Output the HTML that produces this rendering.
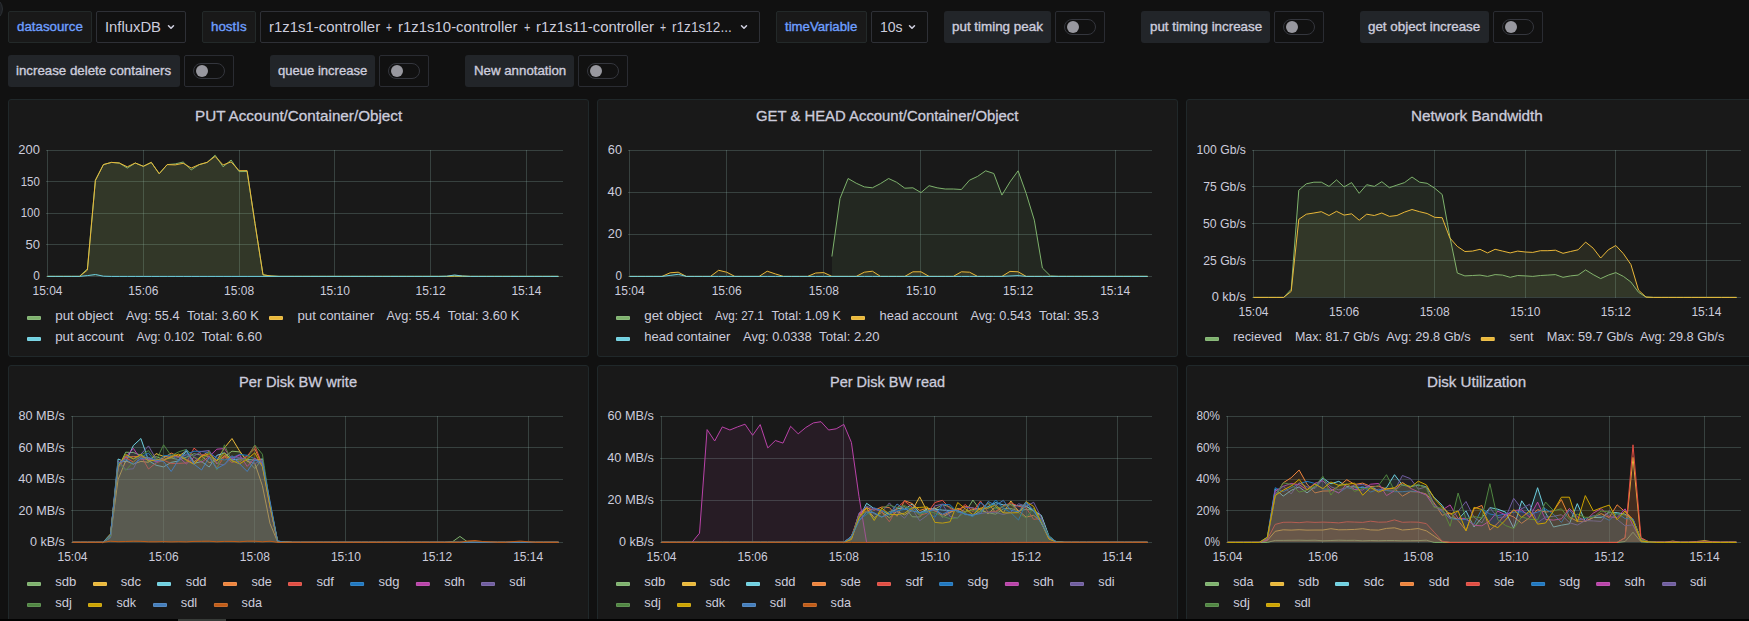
<!DOCTYPE html>
<html lang="en"><head><meta charset="utf-8"><title>Swift benchmark dashboard</title>
<style>
html,body{margin:0;padding:0;background:#111111;}
body{width:1749px;height:621px;overflow:hidden;position:relative;
 font-family:"Liberation Sans",sans-serif;color:#ccccdc;}
.abs{position:absolute;box-sizing:border-box;}
.lbl{position:absolute;box-sizing:border-box;height:32px;top:11px;border-radius:2px;}
.lbl.var{background:#191919;border:1px solid #232929;color:#6e9fff;}
.lbl.ann{background:#222529;border-radius:3px;}
.val{position:absolute;box-sizing:border-box;height:32px;top:11px;border:1px solid #2e3036;
 border-radius:2px;background:#111111;}
.t{position:absolute;white-space:nowrap;transform-origin:0 0;line-height:1;display:block;}
.tg{position:absolute;box-sizing:border-box;height:32px;width:50px;border:1px solid #2a2c32;
 border-radius:2px;background:#111111;}
.tg i{position:absolute;left:8px;top:7px;width:32px;height:16px;box-sizing:border-box;
 border:1px solid #34363d;border-radius:8px;background:#111111;}
.tg b{position:absolute;left:11px;top:9px;width:12px;height:12px;border-radius:50%;background:#98989f;}
.panel{position:absolute;box-sizing:border-box;width:581px;height:258px;background:#191919;
 border:1px solid #20282a;border-radius:3px;overflow:hidden;}
.panel svg{position:absolute;left:-1px;top:-1px;}
.title{position:absolute;white-space:nowrap;transform-origin:0 0;line-height:1;}
svg text{font-family:"Liberation Sans",sans-serif;fill:#ccccdc;}
</style></head><body>

<div class="abs" style="left:-21px;top:-2.6px;width:24px;height:24px;border-radius:50%;background:#1e2024;border:1px solid #2c3034"></div>
<div id="submenu">
<div class="lbl var" style="left:8px;width:84px;top:11px"></div>
<span class="t" style="left:17.10px;top:20.70px;font-size:12.40px;transform:scaleX(1.0741);color:#6e9fff;-webkit-text-stroke:0.35px #6e9fff;">datasource</span>
<div class="val" style="left:96px;width:90px;top:11px"></div>
<span class="t" style="left:105.20px;top:19.81px;font-size:14.40px;transform:scaleX(1.0290);">InfluxDB</span>
<svg class="abs" style="left:164.5px;top:20.8px" width="12" height="12" viewBox="0 0 12 12"><path d="M3.5 4.7 L6 7.3 L8.5 4.7" fill="none" stroke="#d0d0e0" stroke-width="1.5" stroke-linecap="round" stroke-linejoin="round"/></svg>
<div class="lbl var" style="left:202px;width:54px;top:11px"></div>
<span class="t" style="left:211.30px;top:20.70px;font-size:12.40px;transform:scaleX(1.0791);color:#6e9fff;-webkit-text-stroke:0.35px #6e9fff;">hostIs</span>
<div class="val" style="left:260px;width:500px;top:11px"></div>
<span class="t" style="left:269.20px;top:19.81px;font-size:14.40px;transform:scaleX(1.0369);">r1z1s1-controller</span>
<span class="t" style="left:386.40px;top:19.81px;font-size:14.40px;transform:scaleX(0.7135);">+</span>
<span class="t" style="left:398.40px;top:19.81px;font-size:14.40px;transform:scaleX(1.0377);">r1z1s10-controller</span>
<span class="t" style="left:523.70px;top:19.81px;font-size:14.40px;transform:scaleX(0.7611);">+</span>
<span class="t" style="left:536.10px;top:19.81px;font-size:14.40px;transform:scaleX(1.0334);">r1z1s11-controller</span>
<span class="t" style="left:659.60px;top:19.81px;font-size:14.40px;transform:scaleX(0.7373);">+</span>
<span class="t" style="left:671.70px;top:19.81px;font-size:14.40px;transform:scaleX(0.9457);">r1z1s12...</span>
<svg class="abs" style="left:737.9px;top:20.8px" width="12" height="12" viewBox="0 0 12 12"><path d="M3.5 4.7 L6 7.3 L8.5 4.7" fill="none" stroke="#d0d0e0" stroke-width="1.5" stroke-linecap="round" stroke-linejoin="round"/></svg>
<div class="lbl var" style="left:776px;width:91px;top:11px"></div>
<span class="t" style="left:785.20px;top:20.70px;font-size:12.40px;transform:scaleX(1.0632);color:#6e9fff;-webkit-text-stroke:0.35px #6e9fff;">timeVariable</span>
<div class="val" style="left:871px;width:57px;top:11px"></div>
<span class="t" style="left:880.40px;top:19.81px;font-size:14.40px;transform:scaleX(0.9734);">10s</span>
<svg class="abs" style="left:906.1px;top:20.8px" width="12" height="12" viewBox="0 0 12 12"><path d="M3.5 4.7 L6 7.3 L8.5 4.7" fill="none" stroke="#d0d0e0" stroke-width="1.5" stroke-linecap="round" stroke-linejoin="round"/></svg>
<div class="lbl ann" style="left:944px;width:107px;top:11px"></div>
<span class="t" style="left:952.30px;top:20.70px;font-size:12.40px;transform:scaleX(1.0809);color:#ccccdc;-webkit-text-stroke:0.35px #ccccdc;">put timing peak</span>
<div class="tg" style="left:1055px;top:11px"><i></i><b></b></div>
<div class="lbl ann" style="left:1141px;width:129px;top:11px"></div>
<span class="t" style="left:1149.60px;top:20.70px;font-size:12.40px;transform:scaleX(1.0781);color:#ccccdc;-webkit-text-stroke:0.35px #ccccdc;">put timing increase</span>
<div class="tg" style="left:1274px;top:11px"><i></i><b></b></div>
<div class="lbl ann" style="left:1360px;width:129px;top:11px"></div>
<span class="t" style="left:1368.20px;top:20.70px;font-size:12.40px;transform:scaleX(1.0789);color:#ccccdc;-webkit-text-stroke:0.35px #ccccdc;">get object increase</span>
<div class="tg" style="left:1493px;top:11px"><i></i><b></b></div>
<div class="lbl ann" style="left:8px;width:172px;top:55px"></div>
<span class="t" style="left:16.30px;top:64.70px;font-size:12.40px;transform:scaleX(1.0721);color:#ccccdc;-webkit-text-stroke:0.35px #ccccdc;">increase delete containers</span>
<div class="tg" style="left:184px;top:55px"><i></i><b></b></div>
<div class="lbl ann" style="left:270px;width:105px;top:55px"></div>
<span class="t" style="left:278.00px;top:64.70px;font-size:12.40px;transform:scaleX(1.0531);color:#ccccdc;-webkit-text-stroke:0.35px #ccccdc;">queue increase</span>
<div class="tg" style="left:379px;top:55px"><i></i><b></b></div>
<div class="lbl ann" style="left:465px;width:109px;top:55px"></div>
<span class="t" style="left:473.50px;top:64.70px;font-size:12.40px;transform:scaleX(1.0711);color:#ccccdc;-webkit-text-stroke:0.35px #ccccdc;">New annotation</span>
<div class="tg" style="left:578px;top:55px"><i></i><b></b></div>
</div>
<main id="grid">
<section class="panel" style="left:8px;top:99px">
<h2 class="title" style="margin:0;font-weight:normal;left:185.90px;top:8.97px;font-size:14.80px;transform:scaleX(1.0294);-webkit-text-stroke:0.3px #ccccdc">PUT Account/Container/Object</h2>
<svg width="581" height="258" viewBox="0 0 581 258">
<path d="M38.0 177.5 H555.3 M38.0 145.5 H555.3 M38.0 114.5 H555.3 M38.0 82.5 H555.3 M38.0 51.5 H555.3" stroke="rgba(149,189,181,0.25)" stroke-width="1" fill="none" shape-rendering="crispEdges"/>
<path d="M39.5 51.0 V178.0 M135.5 51.0 V178.0 M231.5 51.0 V178.0 M326.5 51.0 V178.0 M422.5 51.0 V178.0 M518.5 51.0 V178.0" stroke="rgba(149,189,181,0.25)" stroke-width="1" fill="none" shape-rendering="crispEdges"/>
<path d="M39.5 177.4 L47.5 177.4 L55.5 177.4 L63.4 177.4 L71.4 177.4 L79.4 169.8 L87.4 81.3 L95.4 65.6 L103.4 63.4 L111.3 64.0 L119.3 69.1 L127.3 64.0 L135.3 67.3 L143.3 63.4 L151.2 74.7 L159.2 65.6 L167.2 64.9 L175.2 63.0 L183.2 70.9 L191.2 65.6 L199.1 63.4 L207.1 56.2 L215.1 67.8 L223.1 61.0 L231.1 72.6 L239.1 72.5 L247.0 124.5 L255.0 175.8 L263.0 177.0 L271.0 177.4 L279.0 177.4 L286.9 177.4 L294.9 177.4 L302.9 177.4 L310.9 177.4 L318.9 177.4 L326.9 177.4 L334.8 177.4 L342.8 177.4 L350.8 177.4 L358.8 177.4 L366.8 177.4 L374.7 177.4 L382.7 177.4 L390.7 177.4 L398.7 177.4 L406.7 177.4 L414.7 177.4 L422.6 177.4 L430.6 177.4 L438.6 177.4 L446.6 177.4 L454.6 177.4 L462.5 177.4 L470.5 177.4 L478.5 177.4 L486.5 177.4 L494.5 177.4 L502.5 177.4 L510.4 177.4 L518.4 177.4 L526.4 177.4 L534.4 177.4 L542.4 177.4 L550.4 177.4 L550.4 177.1 L39.5 177.1 Z" fill="#7EB26D" fill-opacity="0.1" stroke="none"/>
<path d="M39.5 177.4 L47.5 177.4 L55.5 177.4 L63.4 177.4 L71.4 177.4 L79.4 169.8 L87.4 81.3 L95.4 65.6 L103.4 63.4 L111.3 64.0 L119.3 69.1 L127.3 64.0 L135.3 67.3 L143.3 63.4 L151.2 74.7 L159.2 65.6 L167.2 64.9 L175.2 63.0 L183.2 70.9 L191.2 65.6 L199.1 63.4 L207.1 56.2 L215.1 67.8 L223.1 61.0 L231.1 72.6 L239.1 72.5 L247.0 124.5 L255.0 175.8 L263.0 177.0 L271.0 177.4 L279.0 177.4 L286.9 177.4 L294.9 177.4 L302.9 177.4 L310.9 177.4 L318.9 177.4 L326.9 177.4 L334.8 177.4 L342.8 177.4 L350.8 177.4 L358.8 177.4 L366.8 177.4 L374.7 177.4 L382.7 177.4 L390.7 177.4 L398.7 177.4 L406.7 177.4 L414.7 177.4 L422.6 177.4 L430.6 177.4 L438.6 177.4 L446.6 177.4 L454.6 177.4 L462.5 177.4 L470.5 177.4 L478.5 177.4 L486.5 177.4 L494.5 177.4 L502.5 177.4 L510.4 177.4 L518.4 177.4 L526.4 177.4 L534.4 177.4 L542.4 177.4 L550.4 177.4" fill="none" stroke="#7EB26D" stroke-width="1" stroke-linejoin="round"/>
<path d="M39.5 177.4 L47.5 177.4 L55.5 177.4 L63.4 177.4 L71.4 177.4 L79.4 171.1 L87.4 81.3 L95.4 65.6 L103.4 63.4 L111.3 64.0 L119.3 67.8 L127.3 64.0 L135.3 67.3 L143.3 63.4 L151.2 74.7 L159.2 65.6 L167.2 65.9 L175.2 64.3 L183.2 69.0 L191.2 65.6 L199.1 63.4 L207.1 57.4 L215.1 65.9 L223.1 62.9 L231.1 71.7 L239.1 71.6 L247.0 124.5 L255.0 175.8 L263.0 177.0 L271.0 177.4 L279.0 177.4 L286.9 177.4 L294.9 177.4 L302.9 177.4 L310.9 177.4 L318.9 177.4 L326.9 177.4 L334.8 177.4 L342.8 177.4 L350.8 177.4 L358.8 177.4 L366.8 177.4 L374.7 177.4 L382.7 177.4 L390.7 177.4 L398.7 177.4 L406.7 177.4 L414.7 177.4 L422.6 177.4 L430.6 177.4 L438.6 177.4 L446.6 176.9 L454.6 177.1 L462.5 177.4 L470.5 177.4 L478.5 177.4 L486.5 177.4 L494.5 177.4 L502.5 177.4 L510.4 177.4 L518.4 177.4 L526.4 177.4 L534.4 177.4 L542.4 177.4 L550.4 177.4 L550.4 177.1 L39.5 177.1 Z" fill="#b7c06e" fill-opacity="0.1" stroke="none"/>
<path d="M39.5 177.4 L47.5 177.4 L55.5 177.4 L63.4 177.4 L71.4 177.4 L79.4 171.1 L87.4 81.3 L95.4 65.6 L103.4 63.4 L111.3 64.0 L119.3 67.8 L127.3 64.0 L135.3 67.3 L143.3 63.4 L151.2 74.7 L159.2 65.6 L167.2 65.9 L175.2 64.3 L183.2 69.0 L191.2 65.6 L199.1 63.4 L207.1 57.4 L215.1 65.9 L223.1 62.9 L231.1 71.7 L239.1 71.6 L247.0 124.5 L255.0 175.8 L263.0 177.0 L271.0 177.4 L279.0 177.4 L286.9 177.4 L294.9 177.4 L302.9 177.4 L310.9 177.4 L318.9 177.4 L326.9 177.4 L334.8 177.4 L342.8 177.4 L350.8 177.4 L358.8 177.4 L366.8 177.4 L374.7 177.4 L382.7 177.4 L390.7 177.4 L398.7 177.4 L406.7 177.4 L414.7 177.4 L422.6 177.4 L430.6 177.4 L438.6 177.4 L446.6 176.9 L454.6 177.1 L462.5 177.4 L470.5 177.4 L478.5 177.4 L486.5 177.4 L494.5 177.4 L502.5 177.4 L510.4 177.4 L518.4 177.4 L526.4 177.4 L534.4 177.4 L542.4 177.4 L550.4 177.4" fill="none" stroke="#EAB839" stroke-width="1" stroke-linejoin="round"/>
<path d="M39.5 177.4 L47.5 177.4 L55.5 177.4 L63.4 177.4 L71.4 177.4 L79.4 176.6 L87.4 175.5 L95.4 177.2 L103.4 177.4 L111.3 177.4 L119.3 177.4 L127.3 177.4 L135.3 177.4 L143.3 177.4 L151.2 177.4 L159.2 177.4 L167.2 177.4 L175.2 177.4 L183.2 177.4 L191.2 177.4 L199.1 177.4 L207.1 177.4 L215.1 177.4 L223.1 177.4 L231.1 177.4 L239.1 177.4 L247.0 177.4 L255.0 177.4 L263.0 177.4 L271.0 177.4 L279.0 177.4 L286.9 177.4 L294.9 177.4 L302.9 177.4 L310.9 177.4 L318.9 177.4 L326.9 177.4 L334.8 177.4 L342.8 177.4 L350.8 177.4 L358.8 177.4 L366.8 177.4 L374.7 177.4 L382.7 177.4 L390.7 177.4 L398.7 177.4 L406.7 177.4 L414.7 177.4 L422.6 177.4 L430.6 177.4 L438.6 177.2 L446.6 176.0 L454.6 177.1 L462.5 177.4 L470.5 177.4 L478.5 177.4 L486.5 177.4 L494.5 177.4 L502.5 177.4 L510.4 177.4 L518.4 177.4 L526.4 177.4 L534.4 177.4 L542.4 177.4 L550.4 177.4 L550.4 177.1 L39.5 177.1 Z" fill="#6ED0E0" fill-opacity="0.1" stroke="none"/>
<path d="M39.5 177.4 L47.5 177.4 L55.5 177.4 L63.4 177.4 L71.4 177.4 L79.4 176.6 L87.4 175.5 L95.4 177.2 L103.4 177.4 L111.3 177.4 L119.3 177.4 L127.3 177.4 L135.3 177.4 L143.3 177.4 L151.2 177.4 L159.2 177.4 L167.2 177.4 L175.2 177.4 L183.2 177.4 L191.2 177.4 L199.1 177.4 L207.1 177.4 L215.1 177.4 L223.1 177.4 L231.1 177.4 L239.1 177.4 L247.0 177.4 L255.0 177.4 L263.0 177.4 L271.0 177.4 L279.0 177.4 L286.9 177.4 L294.9 177.4 L302.9 177.4 L310.9 177.4 L318.9 177.4 L326.9 177.4 L334.8 177.4 L342.8 177.4 L350.8 177.4 L358.8 177.4 L366.8 177.4 L374.7 177.4 L382.7 177.4 L390.7 177.4 L398.7 177.4 L406.7 177.4 L414.7 177.4 L422.6 177.4 L430.6 177.4 L438.6 177.2 L446.6 176.0 L454.6 177.1 L462.5 177.4 L470.5 177.4 L478.5 177.4 L486.5 177.4 L494.5 177.4 L502.5 177.4 L510.4 177.4 L518.4 177.4 L526.4 177.4 L534.4 177.4 L542.4 177.4 L550.4 177.4" fill="none" stroke="#6ED0E0" stroke-width="1" stroke-linejoin="round"/>
<text x="25.30" y="181.3" font-size="12.2" textLength="6.60" lengthAdjust="spacingAndGlyphs">0</text>
<text x="17.40" y="149.8" font-size="12.2" textLength="14.50" lengthAdjust="spacingAndGlyphs">50</text>
<text x="12.70" y="118.3" font-size="12.2" textLength="19.20" lengthAdjust="spacingAndGlyphs">100</text>
<text x="12.70" y="86.8" font-size="12.2" textLength="19.20" lengthAdjust="spacingAndGlyphs">150</text>
<text x="10.30" y="55.3" font-size="12.2" textLength="21.60" lengthAdjust="spacingAndGlyphs">200</text>
<text x="39.5" y="196.0" font-size="12.0" text-anchor="middle">15:04</text>
<text x="135.3" y="196.0" font-size="12.0" text-anchor="middle">15:06</text>
<text x="231.1" y="196.0" font-size="12.0" text-anchor="middle">15:08</text>
<text x="326.9" y="196.0" font-size="12.0" text-anchor="middle">15:10</text>
<text x="422.6" y="196.0" font-size="12.0" text-anchor="middle">15:12</text>
<text x="518.4" y="196.0" font-size="12.0" text-anchor="middle">15:14</text>
<rect x="19.0" y="217.0" width="14" height="4" rx="1" fill="#8ab97b"/><rect x="20.0" y="218.0" width="12" height="2" fill="#7EB26D"/>
<text x="47.20" y="221.20" font-size="12.4" textLength="58.10" lengthAdjust="spacingAndGlyphs">put object</text>
<text x="118.00" y="221.20" font-size="12.4" textLength="53.50" lengthAdjust="spacingAndGlyphs">Avg: 55.4</text>
<text x="178.90" y="221.20" font-size="12.4" textLength="72.10" lengthAdjust="spacingAndGlyphs">Total: 3.60 K</text>
<rect x="261.0" y="217.0" width="14" height="4" rx="1" fill="#ecbf4c"/><rect x="262.0" y="218.0" width="12" height="2" fill="#EAB839"/>
<text x="289.40" y="221.20" font-size="12.4" textLength="76.70" lengthAdjust="spacingAndGlyphs">put container</text>
<text x="378.60" y="221.20" font-size="12.4" textLength="53.50" lengthAdjust="spacingAndGlyphs">Avg: 55.4</text>
<text x="439.80" y="221.20" font-size="12.4" textLength="71.50" lengthAdjust="spacingAndGlyphs">Total: 3.60 K</text>
<rect x="19.0" y="238.0" width="14" height="4" rx="1" fill="#7cd4e3"/><rect x="20.0" y="239.0" width="12" height="2" fill="#6ED0E0"/>
<text x="47.20" y="242.20" font-size="12.4" textLength="68.60" lengthAdjust="spacingAndGlyphs">put account</text>
<text x="128.60" y="242.20" font-size="12.4" textLength="57.80" lengthAdjust="spacingAndGlyphs">Avg: 0.102</text>
<text x="193.80" y="242.20" font-size="12.4" textLength="60.10" lengthAdjust="spacingAndGlyphs">Total: 6.60</text>
</svg></section>
<section class="panel" style="left:597px;top:99px">
<h2 class="title" style="margin:0;font-weight:normal;left:158.25px;top:8.97px;font-size:14.80px;transform:scaleX(1.0045);-webkit-text-stroke:0.3px #ccccdc">GET &amp; HEAD Account/Container/Object</h2>
<svg width="581" height="258" viewBox="0 0 581 258">
<path d="M31.1 177.5 H555.3 M31.1 135.5 H555.3 M31.1 93.5 H555.3 M31.1 51.5 H555.3" stroke="rgba(149,189,181,0.25)" stroke-width="1" fill="none" shape-rendering="crispEdges"/>
<path d="M32.5 51.0 V178.0 M129.5 51.0 V178.0 M226.5 51.0 V178.0 M323.5 51.0 V178.0 M421.5 51.0 V178.0 M518.5 51.0 V178.0" stroke="rgba(149,189,181,0.25)" stroke-width="1" fill="none" shape-rendering="crispEdges"/>
<path d="M234.9 157.5 L243.0 99.5 L251.1 79.5 L259.2 84.2 L267.3 87.9 L275.4 88.8 L283.5 84.6 L291.6 79.5 L299.7 83.3 L307.8 89.2 L315.9 88.8 L324.0 93.6 L332.1 86.7 L340.1 88.8 L348.2 90.0 L356.3 90.0 L364.4 90.5 L372.5 81.2 L380.6 77.4 L388.7 71.8 L396.8 74.5 L404.9 96.1 L413.0 82.9 L421.1 71.8 L429.2 94.5 L437.3 121.1 L445.4 169.0 L453.5 177.0 L461.5 177.4 L469.6 177.4 L477.7 177.4 L485.8 177.4 L493.9 177.4 L502.0 177.4 L510.1 177.4 L518.2 177.4 L526.3 177.4 L534.4 177.4 L542.5 177.4 L550.6 177.4 L550.6 177.1 L234.9 177.1 Z" fill="#7EB26D" fill-opacity="0.1" stroke="none"/>
<path d="M234.9 157.5 L243.0 99.5 L251.1 79.5 L259.2 84.2 L267.3 87.9 L275.4 88.8 L283.5 84.6 L291.6 79.5 L299.7 83.3 L307.8 89.2 L315.9 88.8 L324.0 93.6 L332.1 86.7 L340.1 88.8 L348.2 90.0 L356.3 90.0 L364.4 90.5 L372.5 81.2 L380.6 77.4 L388.7 71.8 L396.8 74.5 L404.9 96.1 L413.0 82.9 L421.1 71.8 L429.2 94.5 L437.3 121.1 L445.4 169.0 L453.5 177.0 L461.5 177.4 L469.6 177.4 L477.7 177.4 L485.8 177.4 L493.9 177.4 L502.0 177.4 L510.1 177.4 L518.2 177.4 L526.3 177.4 L534.4 177.4 L542.5 177.4 L550.6 177.4" fill="none" stroke="#7EB26D" stroke-width="1" stroke-linejoin="round"/>
<path d="M32.6 177.4 L40.7 177.4 L48.8 177.4 L56.9 177.4 L65.0 177.4 L73.1 173.8 L81.2 173.2 L89.3 177.4 L97.3 177.4 L105.4 177.4 L113.5 177.4 L121.6 171.3 L129.7 173.2 L137.8 177.4 L145.9 177.4 L154.0 177.4 L162.1 177.4 L170.2 172.2 L178.3 174.9 L186.4 177.4 L194.5 177.4 L202.6 177.4 L210.7 177.4 L218.7 174.0 L226.8 173.6 L234.9 177.4 L243.0 177.4 L251.1 177.4 L259.2 177.4 L267.3 173.2 L275.4 172.2 L283.5 177.4 L291.6 177.4 L299.7 177.4 L307.8 177.4 L315.9 172.8 L324.0 172.8 L332.1 177.4 L340.1 177.4 L348.2 177.4 L356.3 177.4 L364.4 172.8 L372.5 173.2 L380.6 177.4 L388.7 177.4 L396.8 177.4 L404.9 177.4 L413.0 172.4 L421.1 172.8 L429.2 177.4 L437.3 177.4 L445.4 177.4 L453.5 177.4 L461.5 177.4 L469.6 177.4 L477.7 177.4 L485.8 177.4 L493.9 177.4 L502.0 177.4 L510.1 177.4 L518.2 177.4 L526.3 177.4 L534.4 177.4 L542.5 177.4 L550.6 177.4 L550.6 177.1 L32.6 177.1 Z" fill="#b7c06e" fill-opacity="0.1" stroke="none"/>
<path d="M32.6 177.4 L40.7 177.4 L48.8 177.4 L56.9 177.4 L65.0 177.4 L73.1 173.8 L81.2 173.2 L89.3 177.4 L97.3 177.4 L105.4 177.4 L113.5 177.4 L121.6 171.3 L129.7 173.2 L137.8 177.4 L145.9 177.4 L154.0 177.4 L162.1 177.4 L170.2 172.2 L178.3 174.9 L186.4 177.4 L194.5 177.4 L202.6 177.4 L210.7 177.4 L218.7 174.0 L226.8 173.6 L234.9 177.4 L243.0 177.4 L251.1 177.4 L259.2 177.4 L267.3 173.2 L275.4 172.2 L283.5 177.4 L291.6 177.4 L299.7 177.4 L307.8 177.4 L315.9 172.8 L324.0 172.8 L332.1 177.4 L340.1 177.4 L348.2 177.4 L356.3 177.4 L364.4 172.8 L372.5 173.2 L380.6 177.4 L388.7 177.4 L396.8 177.4 L404.9 177.4 L413.0 172.4 L421.1 172.8 L429.2 177.4 L437.3 177.4 L445.4 177.4 L453.5 177.4 L461.5 177.4 L469.6 177.4 L477.7 177.4 L485.8 177.4 L493.9 177.4 L502.0 177.4 L510.1 177.4 L518.2 177.4 L526.3 177.4 L534.4 177.4 L542.5 177.4 L550.6 177.4" fill="none" stroke="#EAB839" stroke-width="1" stroke-linejoin="round"/>
<path d="M32.6 177.4 L40.7 177.4 L48.8 177.4 L56.9 177.4 L65.0 177.4 L73.1 176.4 L81.2 175.3 L89.3 177.4 L97.3 177.4 L105.4 177.4 L113.5 177.4 L121.6 177.4 L129.7 177.4 L137.8 177.4 L145.9 177.4 L154.0 177.4 L162.1 177.4 L170.2 177.4 L178.3 177.4 L186.4 177.4 L194.5 177.4 L202.6 177.4 L210.7 177.4 L218.7 177.4 L226.8 177.4 L234.9 177.4 L243.0 177.4 L251.1 177.4 L259.2 177.4 L267.3 177.4 L275.4 177.4 L283.5 177.4 L291.6 177.4 L299.7 177.4 L307.8 177.4 L315.9 177.4 L324.0 177.4 L332.1 177.4 L340.1 177.4 L348.2 177.4 L356.3 177.4 L364.4 177.4 L372.5 177.4 L380.6 177.4 L388.7 177.4 L396.8 177.4 L404.9 177.4 L413.0 177.0 L421.1 176.6 L429.2 177.4 L437.3 177.4 L445.4 177.4 L453.5 177.4 L461.5 177.4 L469.6 177.4 L477.7 177.4 L485.8 177.4 L493.9 177.4 L502.0 177.4 L510.1 177.4 L518.2 177.4 L526.3 177.4 L534.4 177.4 L542.5 177.4 L550.6 177.4 L550.6 177.1 L32.6 177.1 Z" fill="#6ED0E0" fill-opacity="0.1" stroke="none"/>
<path d="M32.6 177.4 L40.7 177.4 L48.8 177.4 L56.9 177.4 L65.0 177.4 L73.1 176.4 L81.2 175.3 L89.3 177.4 L97.3 177.4 L105.4 177.4 L113.5 177.4 L121.6 177.4 L129.7 177.4 L137.8 177.4 L145.9 177.4 L154.0 177.4 L162.1 177.4 L170.2 177.4 L178.3 177.4 L186.4 177.4 L194.5 177.4 L202.6 177.4 L210.7 177.4 L218.7 177.4 L226.8 177.4 L234.9 177.4 L243.0 177.4 L251.1 177.4 L259.2 177.4 L267.3 177.4 L275.4 177.4 L283.5 177.4 L291.6 177.4 L299.7 177.4 L307.8 177.4 L315.9 177.4 L324.0 177.4 L332.1 177.4 L340.1 177.4 L348.2 177.4 L356.3 177.4 L364.4 177.4 L372.5 177.4 L380.6 177.4 L388.7 177.4 L396.8 177.4 L404.9 177.4 L413.0 177.0 L421.1 176.6 L429.2 177.4 L437.3 177.4 L445.4 177.4 L453.5 177.4 L461.5 177.4 L469.6 177.4 L477.7 177.4 L485.8 177.4 L493.9 177.4 L502.0 177.4 L510.1 177.4 L518.2 177.4 L526.3 177.4 L534.4 177.4 L542.5 177.4 L550.6 177.4" fill="none" stroke="#6ED0E0" stroke-width="1" stroke-linejoin="round"/>
<text x="18.50" y="181.3" font-size="12.2" textLength="6.50" lengthAdjust="spacingAndGlyphs">0</text>
<text x="10.80" y="139.3" font-size="12.2" textLength="14.20" lengthAdjust="spacingAndGlyphs">20</text>
<text x="10.60" y="97.3" font-size="12.2" textLength="14.40" lengthAdjust="spacingAndGlyphs">40</text>
<text x="10.80" y="55.3" font-size="12.2" textLength="14.20" lengthAdjust="spacingAndGlyphs">60</text>
<text x="32.6" y="196.0" font-size="12.0" text-anchor="middle">15:04</text>
<text x="129.7" y="196.0" font-size="12.0" text-anchor="middle">15:06</text>
<text x="226.8" y="196.0" font-size="12.0" text-anchor="middle">15:08</text>
<text x="324.0" y="196.0" font-size="12.0" text-anchor="middle">15:10</text>
<text x="421.1" y="196.0" font-size="12.0" text-anchor="middle">15:12</text>
<text x="518.2" y="196.0" font-size="12.0" text-anchor="middle">15:14</text>
<rect x="19.0" y="217.0" width="14" height="4" rx="1" fill="#8ab97b"/><rect x="20.0" y="218.0" width="12" height="2" fill="#7EB26D"/>
<text x="47.20" y="221.20" font-size="12.4" textLength="58.10" lengthAdjust="spacingAndGlyphs">get object</text>
<text x="118.00" y="221.20" font-size="12.4" textLength="48.70" lengthAdjust="spacingAndGlyphs">Avg: 27.1</text>
<text x="174.60" y="221.20" font-size="12.4" textLength="69.30" lengthAdjust="spacingAndGlyphs">Total: 1.09 K</text>
<rect x="254.0" y="217.0" width="14" height="4" rx="1" fill="#ecbf4c"/><rect x="255.0" y="218.0" width="12" height="2" fill="#EAB839"/>
<text x="282.50" y="221.20" font-size="12.4" textLength="78.00" lengthAdjust="spacingAndGlyphs">head account</text>
<text x="373.40" y="221.20" font-size="12.4" textLength="60.90" lengthAdjust="spacingAndGlyphs">Avg: 0.543</text>
<text x="442.00" y="221.20" font-size="12.4" textLength="60.00" lengthAdjust="spacingAndGlyphs">Total: 35.3</text>
<rect x="19.0" y="238.0" width="14" height="4" rx="1" fill="#7cd4e3"/><rect x="20.0" y="239.0" width="12" height="2" fill="#6ED0E0"/>
<text x="47.20" y="242.20" font-size="12.4" textLength="86.20" lengthAdjust="spacingAndGlyphs">head container</text>
<text x="146.10" y="242.20" font-size="12.4" textLength="68.60" lengthAdjust="spacingAndGlyphs">Avg: 0.0338</text>
<text x="222.10" y="242.20" font-size="12.4" textLength="60.40" lengthAdjust="spacingAndGlyphs">Total: 2.20</text>
</svg></section>
<section class="panel" style="left:1186px;top:99px">
<h2 class="title" style="margin:0;font-weight:normal;left:223.55px;top:8.97px;font-size:14.80px;transform:scaleX(1.0345);-webkit-text-stroke:0.3px #ccccdc">Network Bandwidth</h2>
<svg width="581" height="258" viewBox="0 0 581 258">
<path d="M66.0 198.5 H555.3 M66.0 161.5 H555.3 M66.0 124.5 H555.3 M66.0 87.5 H555.3 M66.0 51.5 H555.3" stroke="rgba(149,189,181,0.25)" stroke-width="1" fill="none" shape-rendering="crispEdges"/>
<path d="M67.5 51.0 V199.0 M158.5 51.0 V199.0 M248.5 51.0 V199.0 M339.5 51.0 V199.0 M429.5 51.0 V199.0 M520.5 51.0 V199.0" stroke="rgba(149,189,181,0.25)" stroke-width="1" fill="none" shape-rendering="crispEdges"/>
<path d="M67.5 198.4 L75.0 198.4 L82.6 198.4 L90.1 198.4 L97.7 198.4 L105.2 190.3 L112.8 91.2 L120.3 84.8 L127.9 83.2 L135.4 83.2 L143.0 87.4 L150.5 80.9 L158.1 87.9 L165.6 83.6 L173.2 94.3 L180.7 85.7 L188.3 87.4 L195.8 82.7 L203.4 88.7 L210.9 86.1 L218.5 83.6 L226.0 78.0 L233.6 83.2 L241.1 84.3 L248.7 89.2 L256.2 95.5 L263.8 137.5 L271.3 174.0 L278.9 176.9 L286.4 176.5 L294.0 176.1 L301.5 177.4 L309.1 175.6 L316.6 176.1 L324.2 178.3 L331.7 176.5 L339.3 176.9 L346.8 177.4 L354.4 176.5 L361.9 176.1 L369.4 175.6 L377.0 178.3 L384.5 176.9 L392.1 176.1 L399.6 170.9 L407.2 175.6 L414.7 179.6 L422.3 176.1 L429.8 173.6 L437.4 177.4 L444.9 183.0 L452.5 193.3 L460.0 198.1 L467.6 198.4 L475.1 198.4 L482.7 198.4 L490.2 198.4 L497.8 198.4 L505.3 198.4 L512.9 198.4 L520.4 198.4 L528.0 198.4 L535.5 198.4 L543.1 198.4 L550.6 198.4 L550.6 198.1 L67.5 198.1 Z" fill="#7EB26D" fill-opacity="0.1" stroke="none"/>
<path d="M67.5 198.4 L75.0 198.4 L82.6 198.4 L90.1 198.4 L97.7 198.4 L105.2 190.3 L112.8 91.2 L120.3 84.8 L127.9 83.2 L135.4 83.2 L143.0 87.4 L150.5 80.9 L158.1 87.9 L165.6 83.6 L173.2 94.3 L180.7 85.7 L188.3 87.4 L195.8 82.7 L203.4 88.7 L210.9 86.1 L218.5 83.6 L226.0 78.0 L233.6 83.2 L241.1 84.3 L248.7 89.2 L256.2 95.5 L263.8 137.5 L271.3 174.0 L278.9 176.9 L286.4 176.5 L294.0 176.1 L301.5 177.4 L309.1 175.6 L316.6 176.1 L324.2 178.3 L331.7 176.5 L339.3 176.9 L346.8 177.4 L354.4 176.5 L361.9 176.1 L369.4 175.6 L377.0 178.3 L384.5 176.9 L392.1 176.1 L399.6 170.9 L407.2 175.6 L414.7 179.6 L422.3 176.1 L429.8 173.6 L437.4 177.4 L444.9 183.0 L452.5 193.3 L460.0 198.1 L467.6 198.4 L475.1 198.4 L482.7 198.4 L490.2 198.4 L497.8 198.4 L505.3 198.4 L512.9 198.4 L520.4 198.4 L528.0 198.4 L535.5 198.4 L543.1 198.4 L550.6 198.4" fill="none" stroke="#7EB26D" stroke-width="1" stroke-linejoin="round"/>
<path d="M67.5 198.4 L75.0 198.4 L82.6 198.4 L90.1 198.4 L97.7 198.4 L105.2 192.4 L112.8 120.3 L120.3 115.2 L127.9 114.0 L135.4 112.7 L143.0 116.5 L150.5 112.3 L158.1 116.1 L165.6 114.8 L173.2 121.2 L180.7 115.2 L188.3 116.5 L195.8 114.0 L203.4 117.4 L210.9 116.5 L218.5 113.1 L226.0 110.5 L233.6 112.7 L241.1 114.5 L248.7 118.3 L256.2 118.7 L263.8 138.9 L271.3 147.4 L278.9 152.5 L286.4 152.1 L294.0 150.3 L301.5 153.9 L309.1 150.3 L316.6 152.1 L324.2 153.9 L331.7 152.1 L339.3 153.0 L346.8 153.4 L354.4 151.7 L361.9 151.7 L369.4 151.2 L377.0 154.3 L384.5 152.5 L392.1 150.8 L399.6 143.1 L407.2 149.2 L414.7 159.0 L422.3 150.8 L429.8 146.5 L437.4 154.7 L444.9 165.5 L452.5 191.1 L460.0 198.1 L467.6 198.4 L475.1 198.4 L482.7 198.4 L490.2 198.4 L497.8 198.4 L505.3 198.4 L512.9 198.4 L520.4 198.4 L528.0 198.4 L535.5 198.4 L543.1 198.4 L550.6 198.4 L550.6 198.1 L67.5 198.1 Z" fill="#b7c06e" fill-opacity="0.1" stroke="none"/>
<path d="M67.5 198.4 L75.0 198.4 L82.6 198.4 L90.1 198.4 L97.7 198.4 L105.2 192.4 L112.8 120.3 L120.3 115.2 L127.9 114.0 L135.4 112.7 L143.0 116.5 L150.5 112.3 L158.1 116.1 L165.6 114.8 L173.2 121.2 L180.7 115.2 L188.3 116.5 L195.8 114.0 L203.4 117.4 L210.9 116.5 L218.5 113.1 L226.0 110.5 L233.6 112.7 L241.1 114.5 L248.7 118.3 L256.2 118.7 L263.8 138.9 L271.3 147.4 L278.9 152.5 L286.4 152.1 L294.0 150.3 L301.5 153.9 L309.1 150.3 L316.6 152.1 L324.2 153.9 L331.7 152.1 L339.3 153.0 L346.8 153.4 L354.4 151.7 L361.9 151.7 L369.4 151.2 L377.0 154.3 L384.5 152.5 L392.1 150.8 L399.6 143.1 L407.2 149.2 L414.7 159.0 L422.3 150.8 L429.8 146.5 L437.4 154.7 L444.9 165.5 L452.5 191.1 L460.0 198.1 L467.6 198.4 L475.1 198.4 L482.7 198.4 L490.2 198.4 L497.8 198.4 L505.3 198.4 L512.9 198.4 L520.4 198.4 L528.0 198.4 L535.5 198.4 L543.1 198.4 L550.6 198.4" fill="none" stroke="#EAB839" stroke-width="1" stroke-linejoin="round"/>
<text x="25.70" y="202.3" font-size="12.2" textLength="34.20" lengthAdjust="spacingAndGlyphs">0 kb/s</text>
<text x="17.20" y="165.6" font-size="12.2" textLength="42.70" lengthAdjust="spacingAndGlyphs">25 Gb/s</text>
<text x="17.00" y="128.8" font-size="12.2" textLength="42.90" lengthAdjust="spacingAndGlyphs">50 Gb/s</text>
<text x="17.20" y="92.0" font-size="12.2" textLength="42.70" lengthAdjust="spacingAndGlyphs">75 Gb/s</text>
<text x="10.60" y="55.3" font-size="12.2" textLength="49.30" lengthAdjust="spacingAndGlyphs">100 Gb/s</text>
<text x="67.5" y="217.0" font-size="12.0" text-anchor="middle">15:04</text>
<text x="158.1" y="217.0" font-size="12.0" text-anchor="middle">15:06</text>
<text x="248.7" y="217.0" font-size="12.0" text-anchor="middle">15:08</text>
<text x="339.3" y="217.0" font-size="12.0" text-anchor="middle">15:10</text>
<text x="429.8" y="217.0" font-size="12.0" text-anchor="middle">15:12</text>
<text x="520.4" y="217.0" font-size="12.0" text-anchor="middle">15:14</text>
<rect x="19.0" y="238.0" width="14" height="4" rx="1" fill="#8ab97b"/><rect x="20.0" y="239.0" width="12" height="2" fill="#7EB26D"/>
<text x="47.20" y="242.20" font-size="12.4" textLength="48.80" lengthAdjust="spacingAndGlyphs">recieved</text>
<text x="108.90" y="242.20" font-size="12.4" textLength="84.60" lengthAdjust="spacingAndGlyphs">Max: 81.7 Gb/s</text>
<text x="200.30" y="242.20" font-size="12.4" textLength="84.40" lengthAdjust="spacingAndGlyphs">Avg: 29.8 Gb/s</text>
<rect x="294.8" y="238.0" width="14" height="4" rx="1" fill="#ecbf4c"/><rect x="295.8" y="239.0" width="12" height="2" fill="#EAB839"/>
<text x="323.40" y="242.20" font-size="12.4" textLength="24.20" lengthAdjust="spacingAndGlyphs">sent</text>
<text x="360.80" y="242.20" font-size="12.4" textLength="86.60" lengthAdjust="spacingAndGlyphs">Max: 59.7 Gb/s</text>
<text x="453.90" y="242.20" font-size="12.4" textLength="84.40" lengthAdjust="spacingAndGlyphs">Avg: 29.8 Gb/s</text>
</svg></section>
<section class="panel" style="left:8px;top:365px">
<h2 class="title" style="margin:0;font-weight:normal;left:230.45px;top:8.97px;font-size:14.80px;transform:scaleX(0.9905);-webkit-text-stroke:0.3px #ccccdc">Per Disk BW write</h2>
<svg width="581" height="258" viewBox="0 0 581 258">
<path d="M63.0 177.5 H555.3 M63.0 145.5 H555.3 M63.0 114.5 H555.3 M63.0 82.5 H555.3 M63.0 51.5 H555.3" stroke="rgba(149,189,181,0.25)" stroke-width="1" fill="none" shape-rendering="crispEdges"/>
<path d="M64.5 51.0 V178.0 M155.5 51.0 V178.0 M246.5 51.0 V178.0 M337.5 51.0 V178.0 M429.5 51.0 V178.0 M520.5 51.0 V178.0" stroke="rgba(149,189,181,0.25)" stroke-width="1" fill="none" shape-rendering="crispEdges"/>
<path d="M64.5 177.4 L72.1 177.4 L79.7 177.4 L87.3 177.4 L94.9 177.4 L102.5 171.1 L110.1 102.9 L117.7 87.2 L125.3 87.5 L132.9 90.3 L140.5 94.1 L148.0 91.7 L155.6 94.3 L163.2 93.0 L170.8 94.7 L178.4 92.2 L186.0 88.7 L193.6 90.2 L201.2 91.8 L208.8 95.2 L216.4 91.8 L224.0 86.2 L231.6 86.9 L239.2 95.0 L246.8 103.6 L254.4 93.7 L262.0 141.4 L269.6 176.9 L277.2 177.2 L284.8 177.4 L292.4 177.4 L300.0 177.4 L307.5 177.4 L315.1 177.4 L322.7 177.4 L330.3 177.4 L337.9 177.4 L345.5 177.4 L353.1 177.4 L360.7 177.4 L368.3 177.4 L375.9 177.4 L383.5 177.4 L391.1 177.4 L398.7 177.4 L406.3 177.4 L413.9 177.4 L421.5 177.4 L429.1 177.4 L436.7 177.4 L444.3 176.9 L451.9 171.4 L459.4 176.8 L467.0 177.4 L474.6 177.4 L482.2 177.4 L489.8 177.4 L497.4 177.4 L505.0 177.4 L512.6 177.4 L520.2 177.4 L527.8 177.4 L535.4 177.4 L543.0 177.4 L550.6 177.4 L550.6 177.1 L64.5 177.1 Z" fill="#7eb26d" fill-opacity="0.09" stroke="none"/>
<path d="M64.5 177.4 L72.1 177.4 L79.7 177.4 L87.3 177.4 L94.9 177.4 L102.5 171.1 L110.1 102.9 L117.7 87.2 L125.3 87.5 L132.9 90.3 L140.5 94.1 L148.0 91.7 L155.6 94.3 L163.2 93.0 L170.8 94.7 L178.4 92.2 L186.0 88.7 L193.6 90.2 L201.2 91.8 L208.8 95.2 L216.4 91.8 L224.0 86.2 L231.6 86.9 L239.2 95.0 L246.8 103.6 L254.4 93.7 L262.0 141.4 L269.6 176.9 L277.2 177.2 L284.8 177.4 L292.4 177.4 L300.0 177.4 L307.5 177.4 L315.1 177.4 L322.7 177.4 L330.3 177.4 L337.9 177.4 L345.5 177.4 L353.1 177.4 L360.7 177.4 L368.3 177.4 L375.9 177.4 L383.5 177.4 L391.1 177.4 L398.7 177.4 L406.3 177.4 L413.9 177.4 L421.5 177.4 L429.1 177.4 L436.7 177.4 L444.3 176.9 L451.9 171.4 L459.4 176.8 L467.0 177.4 L474.6 177.4 L482.2 177.4 L489.8 177.4 L497.4 177.4 L505.0 177.4 L512.6 177.4 L520.2 177.4 L527.8 177.4 L535.4 177.4 L543.0 177.4 L550.6 177.4" fill="none" stroke="#7EB26D" stroke-width="1" stroke-linejoin="round"/>
<path d="M64.5 177.4 L72.1 177.4 L79.7 177.4 L87.3 177.4 L94.9 177.4 L102.5 171.2 L110.1 114.4 L117.7 95.8 L125.3 99.1 L132.9 96.4 L140.5 97.3 L148.0 88.6 L155.6 91.4 L163.2 92.3 L170.8 91.0 L178.4 85.9 L186.0 96.8 L193.6 91.1 L201.2 97.6 L208.8 95.7 L216.4 82.9 L224.0 73.5 L231.6 86.0 L239.2 96.4 L246.8 98.3 L254.4 120.7 L262.0 158.5 L269.6 176.9 L277.2 177.2 L284.8 177.4 L292.4 177.4 L300.0 177.4 L307.5 177.4 L315.1 177.4 L322.7 177.4 L330.3 177.4 L337.9 177.4 L345.5 177.4 L353.1 177.4 L360.7 177.4 L368.3 177.4 L375.9 177.4 L383.5 177.4 L391.1 177.4 L398.7 177.4 L406.3 177.4 L413.9 177.4 L421.5 177.4 L429.1 177.4 L436.7 177.4 L444.3 177.4 L451.9 177.4 L459.4 177.4 L467.0 177.4 L474.6 177.4 L482.2 177.4 L489.8 177.4 L497.4 177.4 L505.0 177.4 L512.6 177.4 L520.2 177.4 L527.8 177.4 L535.4 177.4 L543.0 177.4 L550.6 177.4 L550.6 177.1 L64.5 177.1 Z" fill="#c6b839" fill-opacity="0.09" stroke="none"/>
<path d="M64.5 177.4 L72.1 177.4 L79.7 177.4 L87.3 177.4 L94.9 177.4 L102.5 171.2 L110.1 114.4 L117.7 95.8 L125.3 99.1 L132.9 96.4 L140.5 97.3 L148.0 88.6 L155.6 91.4 L163.2 92.3 L170.8 91.0 L178.4 85.9 L186.0 96.8 L193.6 91.1 L201.2 97.6 L208.8 95.7 L216.4 82.9 L224.0 73.5 L231.6 86.0 L239.2 96.4 L246.8 98.3 L254.4 120.7 L262.0 158.5 L269.6 176.9 L277.2 177.2 L284.8 177.4 L292.4 177.4 L300.0 177.4 L307.5 177.4 L315.1 177.4 L322.7 177.4 L330.3 177.4 L337.9 177.4 L345.5 177.4 L353.1 177.4 L360.7 177.4 L368.3 177.4 L375.9 177.4 L383.5 177.4 L391.1 177.4 L398.7 177.4 L406.3 177.4 L413.9 177.4 L421.5 177.4 L429.1 177.4 L436.7 177.4 L444.3 177.4 L451.9 177.4 L459.4 177.4 L467.0 177.4 L474.6 177.4 L482.2 177.4 L489.8 177.4 L497.4 177.4 L505.0 177.4 L512.6 177.4 L520.2 177.4 L527.8 177.4 L535.4 177.4 L543.0 177.4 L550.6 177.4" fill="none" stroke="#EAB839" stroke-width="1" stroke-linejoin="round"/>
<path d="M64.5 177.4 L72.1 177.4 L79.7 177.4 L87.3 177.4 L94.9 177.4 L102.5 170.7 L110.1 94.0 L117.7 97.1 L125.3 80.5 L132.9 73.5 L140.5 95.5 L148.0 100.2 L155.6 101.9 L163.2 97.4 L170.8 95.9 L178.4 86.0 L186.0 98.3 L193.6 96.6 L201.2 102.0 L208.8 90.4 L216.4 87.8 L224.0 94.9 L231.6 93.9 L239.2 94.5 L246.8 95.1 L254.4 94.0 L262.0 139.1 L269.6 176.2 L277.2 177.2 L284.8 177.4 L292.4 177.4 L300.0 177.4 L307.5 177.4 L315.1 177.4 L322.7 177.4 L330.3 177.4 L337.9 177.4 L345.5 177.4 L353.1 177.4 L360.7 177.4 L368.3 177.4 L375.9 177.4 L383.5 177.4 L391.1 177.4 L398.7 177.4 L406.3 177.4 L413.9 177.4 L421.5 177.4 L429.1 177.4 L436.7 177.4 L444.3 177.4 L451.9 177.4 L459.4 177.4 L467.0 177.4 L474.6 177.4 L482.2 177.4 L489.8 177.4 L497.4 177.4 L505.0 177.4 L512.6 177.4 L520.2 177.4 L527.8 177.4 L535.4 177.4 L543.0 177.4 L550.6 177.4 L550.6 177.1 L64.5 177.1 Z" fill="#6ed0e0" fill-opacity="0.09" stroke="none"/>
<path d="M64.5 177.4 L72.1 177.4 L79.7 177.4 L87.3 177.4 L94.9 177.4 L102.5 170.7 L110.1 94.0 L117.7 97.1 L125.3 80.5 L132.9 73.5 L140.5 95.5 L148.0 100.2 L155.6 101.9 L163.2 97.4 L170.8 95.9 L178.4 86.0 L186.0 98.3 L193.6 96.6 L201.2 102.0 L208.8 90.4 L216.4 87.8 L224.0 94.9 L231.6 93.9 L239.2 94.5 L246.8 95.1 L254.4 94.0 L262.0 139.1 L269.6 176.2 L277.2 177.2 L284.8 177.4 L292.4 177.4 L300.0 177.4 L307.5 177.4 L315.1 177.4 L322.7 177.4 L330.3 177.4 L337.9 177.4 L345.5 177.4 L353.1 177.4 L360.7 177.4 L368.3 177.4 L375.9 177.4 L383.5 177.4 L391.1 177.4 L398.7 177.4 L406.3 177.4 L413.9 177.4 L421.5 177.4 L429.1 177.4 L436.7 177.4 L444.3 177.4 L451.9 177.4 L459.4 177.4 L467.0 177.4 L474.6 177.4 L482.2 177.4 L489.8 177.4 L497.4 177.4 L505.0 177.4 L512.6 177.4 L520.2 177.4 L527.8 177.4 L535.4 177.4 L543.0 177.4 L550.6 177.4" fill="none" stroke="#6ED0E0" stroke-width="1" stroke-linejoin="round"/>
<path d="M64.5 177.4 L72.1 177.4 L79.7 177.4 L87.3 177.4 L94.9 177.4 L102.5 172.6 L110.1 101.9 L117.7 92.3 L125.3 91.7 L132.9 91.8 L140.5 92.7 L148.0 95.5 L155.6 92.9 L163.2 88.1 L170.8 91.6 L178.4 94.4 L186.0 98.8 L193.6 91.0 L201.2 86.3 L208.8 99.0 L216.4 90.4 L224.0 96.0 L231.6 96.9 L239.2 90.6 L246.8 83.8 L254.4 100.1 L262.0 140.5 L269.6 176.5 L277.2 177.2 L284.8 177.4 L292.4 177.4 L300.0 177.4 L307.5 177.4 L315.1 177.4 L322.7 177.4 L330.3 177.4 L337.9 177.4 L345.5 177.4 L353.1 177.4 L360.7 177.4 L368.3 177.4 L375.9 177.4 L383.5 177.4 L391.1 177.4 L398.7 177.4 L406.3 177.4 L413.9 177.4 L421.5 177.4 L429.1 177.4 L436.7 177.4 L444.3 177.4 L451.9 177.4 L459.4 177.4 L467.0 177.4 L474.6 177.4 L482.2 177.4 L489.8 177.4 L497.4 177.4 L505.0 177.4 L512.6 177.4 L520.2 177.4 L527.8 177.4 L535.4 177.4 L543.0 177.4 L550.6 177.4 L550.6 177.1 L64.5 177.1 Z" fill="#cb843c" fill-opacity="0.09" stroke="none"/>
<path d="M64.5 177.4 L72.1 177.4 L79.7 177.4 L87.3 177.4 L94.9 177.4 L102.5 172.6 L110.1 101.9 L117.7 92.3 L125.3 91.7 L132.9 91.8 L140.5 92.7 L148.0 95.5 L155.6 92.9 L163.2 88.1 L170.8 91.6 L178.4 94.4 L186.0 98.8 L193.6 91.0 L201.2 86.3 L208.8 99.0 L216.4 90.4 L224.0 96.0 L231.6 96.9 L239.2 90.6 L246.8 83.8 L254.4 100.1 L262.0 140.5 L269.6 176.5 L277.2 177.2 L284.8 177.4 L292.4 177.4 L300.0 177.4 L307.5 177.4 L315.1 177.4 L322.7 177.4 L330.3 177.4 L337.9 177.4 L345.5 177.4 L353.1 177.4 L360.7 177.4 L368.3 177.4 L375.9 177.4 L383.5 177.4 L391.1 177.4 L398.7 177.4 L406.3 177.4 L413.9 177.4 L421.5 177.4 L429.1 177.4 L436.7 177.4 L444.3 177.4 L451.9 177.4 L459.4 177.4 L467.0 177.4 L474.6 177.4 L482.2 177.4 L489.8 177.4 L497.4 177.4 L505.0 177.4 L512.6 177.4 L520.2 177.4 L527.8 177.4 L535.4 177.4 L543.0 177.4 L550.6 177.4" fill="none" stroke="#EF843C" stroke-width="1" stroke-linejoin="round"/>
<path d="M64.5 177.4 L72.1 177.4 L79.7 177.4 L87.3 177.4 L94.9 177.4 L102.5 169.9 L110.1 102.7 L117.7 92.5 L125.3 97.1 L132.9 90.7 L140.5 104.0 L148.0 97.9 L155.6 95.1 L163.2 98.5 L170.8 98.4 L178.4 97.9 L186.0 83.1 L193.6 89.5 L201.2 91.1 L208.8 102.8 L216.4 91.5 L224.0 97.6 L231.6 94.8 L239.2 91.6 L246.8 80.5 L254.4 99.8 L262.0 139.5 L269.6 177.0 L277.2 177.2 L284.8 177.4 L292.4 177.4 L300.0 177.4 L307.5 177.4 L315.1 177.4 L322.7 177.4 L330.3 177.4 L337.9 177.4 L345.5 177.4 L353.1 177.4 L360.7 177.4 L368.3 177.4 L375.9 177.4 L383.5 177.4 L391.1 177.4 L398.7 177.4 L406.3 177.4 L413.9 177.4 L421.5 177.4 L429.1 177.4 L436.7 177.4 L444.3 177.4 L451.9 177.4 L459.4 177.4 L467.0 177.4 L474.6 177.4 L482.2 177.4 L489.8 177.4 L497.4 177.4 L505.0 177.4 L512.6 177.4 L520.2 177.4 L527.8 177.4 L535.4 177.4 L543.0 177.4 L550.6 177.4 L550.6 177.1 L64.5 177.1 Z" fill="#c04d42" fill-opacity="0.09" stroke="none"/>
<path d="M64.5 177.4 L72.1 177.4 L79.7 177.4 L87.3 177.4 L94.9 177.4 L102.5 169.9 L110.1 102.7 L117.7 92.5 L125.3 97.1 L132.9 90.7 L140.5 104.0 L148.0 97.9 L155.6 95.1 L163.2 98.5 L170.8 98.4 L178.4 97.9 L186.0 83.1 L193.6 89.5 L201.2 91.1 L208.8 102.8 L216.4 91.5 L224.0 97.6 L231.6 94.8 L239.2 91.6 L246.8 80.5 L254.4 99.8 L262.0 139.5 L269.6 177.0 L277.2 177.2 L284.8 177.4 L292.4 177.4 L300.0 177.4 L307.5 177.4 L315.1 177.4 L322.7 177.4 L330.3 177.4 L337.9 177.4 L345.5 177.4 L353.1 177.4 L360.7 177.4 L368.3 177.4 L375.9 177.4 L383.5 177.4 L391.1 177.4 L398.7 177.4 L406.3 177.4 L413.9 177.4 L421.5 177.4 L429.1 177.4 L436.7 177.4 L444.3 177.4 L451.9 177.4 L459.4 177.4 L467.0 177.4 L474.6 177.4 L482.2 177.4 L489.8 177.4 L497.4 177.4 L505.0 177.4 L512.6 177.4 L520.2 177.4 L527.8 177.4 L535.4 177.4 L543.0 177.4 L550.6 177.4" fill="none" stroke="#E24D42" stroke-width="1" stroke-linejoin="round"/>
<path d="M64.5 177.4 L72.1 177.4 L79.7 177.4 L87.3 177.4 L94.9 177.4 L102.5 172.7 L110.1 101.8 L117.7 91.1 L125.3 93.7 L132.9 92.1 L140.5 88.2 L148.0 97.8 L155.6 90.8 L163.2 90.0 L170.8 95.6 L178.4 89.2 L186.0 86.2 L193.6 86.4 L201.2 87.5 L208.8 93.2 L216.4 95.0 L224.0 92.8 L231.6 89.4 L239.2 90.3 L246.8 93.8 L254.4 101.6 L262.0 137.8 L269.6 176.9 L277.2 177.2 L284.8 177.4 L292.4 177.4 L300.0 177.4 L307.5 177.4 L315.1 177.4 L322.7 177.4 L330.3 177.4 L337.9 177.4 L345.5 177.4 L353.1 177.4 L360.7 177.4 L368.3 177.4 L375.9 177.4 L383.5 177.4 L391.1 177.4 L398.7 177.4 L406.3 177.4 L413.9 177.4 L421.5 177.4 L429.1 177.4 L436.7 177.4 L444.3 177.4 L451.9 177.4 L459.4 177.4 L467.0 177.4 L474.6 177.4 L482.2 177.4 L489.8 177.4 L497.4 177.4 L505.0 177.4 L512.6 177.4 L520.2 177.4 L527.8 177.4 L535.4 177.4 L543.0 177.4 L550.6 177.4 L550.6 177.1 L64.5 177.1 Z" fill="#1f78c1" fill-opacity="0.09" stroke="none"/>
<path d="M64.5 177.4 L72.1 177.4 L79.7 177.4 L87.3 177.4 L94.9 177.4 L102.5 172.7 L110.1 101.8 L117.7 91.1 L125.3 93.7 L132.9 92.1 L140.5 88.2 L148.0 97.8 L155.6 90.8 L163.2 90.0 L170.8 95.6 L178.4 89.2 L186.0 86.2 L193.6 86.4 L201.2 87.5 L208.8 93.2 L216.4 95.0 L224.0 92.8 L231.6 89.4 L239.2 90.3 L246.8 93.8 L254.4 101.6 L262.0 137.8 L269.6 176.9 L277.2 177.2 L284.8 177.4 L292.4 177.4 L300.0 177.4 L307.5 177.4 L315.1 177.4 L322.7 177.4 L330.3 177.4 L337.9 177.4 L345.5 177.4 L353.1 177.4 L360.7 177.4 L368.3 177.4 L375.9 177.4 L383.5 177.4 L391.1 177.4 L398.7 177.4 L406.3 177.4 L413.9 177.4 L421.5 177.4 L429.1 177.4 L436.7 177.4 L444.3 177.4 L451.9 177.4 L459.4 177.4 L467.0 177.4 L474.6 177.4 L482.2 177.4 L489.8 177.4 L497.4 177.4 L505.0 177.4 L512.6 177.4 L520.2 177.4 L527.8 177.4 L535.4 177.4 L543.0 177.4 L550.6 177.4" fill="none" stroke="#1F78C1" stroke-width="1" stroke-linejoin="round"/>
<path d="M64.5 177.4 L72.1 177.4 L79.7 177.4 L87.3 177.4 L94.9 177.4 L102.5 170.1 L110.1 98.5 L117.7 92.0 L125.3 83.3 L132.9 94.3 L140.5 94.2 L148.0 96.6 L155.6 95.0 L163.2 90.8 L170.8 92.2 L178.4 98.9 L186.0 92.2 L193.6 97.3 L201.2 91.5 L208.8 84.2 L216.4 83.5 L224.0 93.9 L231.6 89.9 L239.2 101.4 L246.8 93.2 L254.4 98.4 L262.0 142.5 L269.6 176.7 L277.2 177.2 L284.8 177.4 L292.4 177.4 L300.0 177.4 L307.5 177.4 L315.1 177.4 L322.7 177.4 L330.3 177.4 L337.9 177.4 L345.5 177.4 L353.1 177.4 L360.7 177.4 L368.3 177.4 L375.9 177.4 L383.5 177.4 L391.1 177.4 L398.7 177.4 L406.3 177.4 L413.9 177.4 L421.5 177.4 L429.1 177.4 L436.7 177.4 L444.3 177.4 L451.9 177.4 L459.4 177.4 L467.0 177.4 L474.6 177.4 L482.2 177.4 L489.8 177.4 L497.4 177.4 L505.0 177.4 L512.6 177.4 L520.2 177.4 L527.8 177.4 L535.4 177.4 L543.0 177.4 L550.6 177.4 L550.6 177.1 L64.5 177.1 Z" fill="#ba43a9" fill-opacity="0.09" stroke="none"/>
<path d="M64.5 177.4 L72.1 177.4 L79.7 177.4 L87.3 177.4 L94.9 177.4 L102.5 170.1 L110.1 98.5 L117.7 92.0 L125.3 83.3 L132.9 94.3 L140.5 94.2 L148.0 96.6 L155.6 95.0 L163.2 90.8 L170.8 92.2 L178.4 98.9 L186.0 92.2 L193.6 97.3 L201.2 91.5 L208.8 84.2 L216.4 83.5 L224.0 93.9 L231.6 89.9 L239.2 101.4 L246.8 93.2 L254.4 98.4 L262.0 142.5 L269.6 176.7 L277.2 177.2 L284.8 177.4 L292.4 177.4 L300.0 177.4 L307.5 177.4 L315.1 177.4 L322.7 177.4 L330.3 177.4 L337.9 177.4 L345.5 177.4 L353.1 177.4 L360.7 177.4 L368.3 177.4 L375.9 177.4 L383.5 177.4 L391.1 177.4 L398.7 177.4 L406.3 177.4 L413.9 177.4 L421.5 177.4 L429.1 177.4 L436.7 177.4 L444.3 177.4 L451.9 177.4 L459.4 177.4 L467.0 177.4 L474.6 177.4 L482.2 177.4 L489.8 177.4 L497.4 177.4 L505.0 177.4 L512.6 177.4 L520.2 177.4 L527.8 177.4 L535.4 177.4 L543.0 177.4 L550.6 177.4" fill="none" stroke="#BA43A9" stroke-width="1" stroke-linejoin="round"/>
<path d="M64.5 177.4 L72.1 177.4 L79.7 177.4 L87.3 177.4 L94.9 177.4 L102.5 171.5 L110.1 96.0 L117.7 104.4 L125.3 103.8 L132.9 89.2 L140.5 80.9 L148.0 93.9 L155.6 95.3 L163.2 90.4 L170.8 92.5 L178.4 89.8 L186.0 91.0 L193.6 86.4 L201.2 85.4 L208.8 98.5 L216.4 100.0 L224.0 92.1 L231.6 92.3 L239.2 94.9 L246.8 98.7 L254.4 94.7 L262.0 141.1 L269.6 176.1 L277.2 177.2 L284.8 177.4 L292.4 177.4 L300.0 177.4 L307.5 177.4 L315.1 177.4 L322.7 177.4 L330.3 177.4 L337.9 177.4 L345.5 177.4 L353.1 177.4 L360.7 177.4 L368.3 177.4 L375.9 177.4 L383.5 177.4 L391.1 177.4 L398.7 177.4 L406.3 177.4 L413.9 177.4 L421.5 177.4 L429.1 177.4 L436.7 177.4 L444.3 177.4 L451.9 177.4 L459.4 177.4 L467.0 177.4 L474.6 177.4 L482.2 177.4 L489.8 177.4 L497.4 177.4 L505.0 177.4 L512.6 177.4 L520.2 177.4 L527.8 177.4 L535.4 177.4 L543.0 177.4 L550.6 177.4 L550.6 177.1 L64.5 177.1 Z" fill="#705da0" fill-opacity="0.09" stroke="none"/>
<path d="M64.5 177.4 L72.1 177.4 L79.7 177.4 L87.3 177.4 L94.9 177.4 L102.5 171.5 L110.1 96.0 L117.7 104.4 L125.3 103.8 L132.9 89.2 L140.5 80.9 L148.0 93.9 L155.6 95.3 L163.2 90.4 L170.8 92.5 L178.4 89.8 L186.0 91.0 L193.6 86.4 L201.2 85.4 L208.8 98.5 L216.4 100.0 L224.0 92.1 L231.6 92.3 L239.2 94.9 L246.8 98.7 L254.4 94.7 L262.0 141.1 L269.6 176.1 L277.2 177.2 L284.8 177.4 L292.4 177.4 L300.0 177.4 L307.5 177.4 L315.1 177.4 L322.7 177.4 L330.3 177.4 L337.9 177.4 L345.5 177.4 L353.1 177.4 L360.7 177.4 L368.3 177.4 L375.9 177.4 L383.5 177.4 L391.1 177.4 L398.7 177.4 L406.3 177.4 L413.9 177.4 L421.5 177.4 L429.1 177.4 L436.7 177.4 L444.3 177.4 L451.9 177.4 L459.4 177.4 L467.0 177.4 L474.6 177.4 L482.2 177.4 L489.8 177.4 L497.4 177.4 L505.0 177.4 L512.6 177.4 L520.2 177.4 L527.8 177.4 L535.4 177.4 L543.0 177.4 L550.6 177.4" fill="none" stroke="#705DA0" stroke-width="1" stroke-linejoin="round"/>
<path d="M64.5 177.4 L72.1 177.4 L79.7 177.4 L87.3 177.4 L94.9 177.4 L102.5 171.1 L110.1 97.2 L117.7 105.4 L125.3 96.9 L132.9 90.0 L140.5 85.6 L148.0 95.6 L155.6 79.8 L163.2 90.7 L170.8 86.8 L178.4 84.4 L186.0 92.0 L193.6 95.6 L201.2 86.7 L208.8 105.1 L216.4 79.8 L224.0 96.8 L231.6 95.4 L239.2 93.8 L246.8 80.0 L254.4 89.2 L262.0 138.7 L269.6 176.0 L277.2 177.2 L284.8 177.4 L292.4 177.4 L300.0 177.4 L307.5 177.4 L315.1 177.4 L322.7 177.4 L330.3 177.4 L337.9 177.4 L345.5 177.4 L353.1 177.4 L360.7 177.4 L368.3 177.4 L375.9 177.4 L383.5 177.4 L391.1 177.4 L398.7 177.4 L406.3 177.4 L413.9 177.4 L421.5 177.4 L429.1 177.4 L436.7 177.4 L444.3 177.4 L451.9 177.4 L459.4 177.4 L467.0 177.4 L474.6 177.4 L482.2 177.4 L489.8 177.4 L497.4 177.4 L505.0 177.4 L512.6 177.4 L520.2 177.4 L527.8 177.4 L535.4 177.4 L543.0 177.4 L550.6 177.4 L550.6 177.1 L64.5 177.1 Z" fill="#508642" fill-opacity="0.09" stroke="none"/>
<path d="M64.5 177.4 L72.1 177.4 L79.7 177.4 L87.3 177.4 L94.9 177.4 L102.5 171.1 L110.1 97.2 L117.7 105.4 L125.3 96.9 L132.9 90.0 L140.5 85.6 L148.0 95.6 L155.6 79.8 L163.2 90.7 L170.8 86.8 L178.4 84.4 L186.0 92.0 L193.6 95.6 L201.2 86.7 L208.8 105.1 L216.4 79.8 L224.0 96.8 L231.6 95.4 L239.2 93.8 L246.8 80.0 L254.4 89.2 L262.0 138.7 L269.6 176.0 L277.2 177.2 L284.8 177.4 L292.4 177.4 L300.0 177.4 L307.5 177.4 L315.1 177.4 L322.7 177.4 L330.3 177.4 L337.9 177.4 L345.5 177.4 L353.1 177.4 L360.7 177.4 L368.3 177.4 L375.9 177.4 L383.5 177.4 L391.1 177.4 L398.7 177.4 L406.3 177.4 L413.9 177.4 L421.5 177.4 L429.1 177.4 L436.7 177.4 L444.3 177.4 L451.9 177.4 L459.4 177.4 L467.0 177.4 L474.6 177.4 L482.2 177.4 L489.8 177.4 L497.4 177.4 L505.0 177.4 L512.6 177.4 L520.2 177.4 L527.8 177.4 L535.4 177.4 L543.0 177.4 L550.6 177.4" fill="none" stroke="#508642" stroke-width="1" stroke-linejoin="round"/>
<path d="M64.5 177.4 L72.1 177.4 L79.7 177.4 L87.3 177.4 L94.9 177.4 L102.5 168.8 L110.1 101.6 L117.7 89.4 L125.3 93.9 L132.9 89.5 L140.5 96.2 L148.0 94.9 L155.6 95.2 L163.2 91.7 L170.8 89.1 L178.4 95.4 L186.0 99.2 L193.6 91.3 L201.2 88.8 L208.8 95.9 L216.4 88.0 L224.0 95.8 L231.6 98.8 L239.2 94.2 L246.8 87.8 L254.4 101.8 L262.0 141.1 L269.6 176.5 L277.2 177.2 L284.8 177.4 L292.4 177.4 L300.0 177.4 L307.5 177.4 L315.1 177.4 L322.7 177.4 L330.3 177.4 L337.9 177.4 L345.5 177.4 L353.1 177.4 L360.7 177.4 L368.3 177.4 L375.9 177.4 L383.5 177.4 L391.1 177.4 L398.7 177.4 L406.3 177.4 L413.9 177.4 L421.5 177.4 L429.1 177.4 L436.7 177.4 L444.3 177.4 L451.9 177.4 L459.4 177.4 L467.0 177.4 L474.6 177.4 L482.2 177.4 L489.8 177.4 L497.4 177.4 L505.0 177.4 L512.6 177.4 L520.2 177.4 L527.8 177.4 L535.4 177.4 L543.0 177.4 L550.6 177.4 L550.6 177.1 L64.5 177.1 Z" fill="#ada300" fill-opacity="0.09" stroke="none"/>
<path d="M64.5 177.4 L72.1 177.4 L79.7 177.4 L87.3 177.4 L94.9 177.4 L102.5 168.8 L110.1 101.6 L117.7 89.4 L125.3 93.9 L132.9 89.5 L140.5 96.2 L148.0 94.9 L155.6 95.2 L163.2 91.7 L170.8 89.1 L178.4 95.4 L186.0 99.2 L193.6 91.3 L201.2 88.8 L208.8 95.9 L216.4 88.0 L224.0 95.8 L231.6 98.8 L239.2 94.2 L246.8 87.8 L254.4 101.8 L262.0 141.1 L269.6 176.5 L277.2 177.2 L284.8 177.4 L292.4 177.4 L300.0 177.4 L307.5 177.4 L315.1 177.4 L322.7 177.4 L330.3 177.4 L337.9 177.4 L345.5 177.4 L353.1 177.4 L360.7 177.4 L368.3 177.4 L375.9 177.4 L383.5 177.4 L391.1 177.4 L398.7 177.4 L406.3 177.4 L413.9 177.4 L421.5 177.4 L429.1 177.4 L436.7 177.4 L444.3 177.4 L451.9 177.4 L459.4 177.4 L467.0 177.4 L474.6 177.4 L482.2 177.4 L489.8 177.4 L497.4 177.4 L505.0 177.4 L512.6 177.4 L520.2 177.4 L527.8 177.4 L535.4 177.4 L543.0 177.4 L550.6 177.4" fill="none" stroke="#CCA300" stroke-width="1" stroke-linejoin="round"/>
<path d="M64.5 177.4 L72.1 177.4 L79.7 177.4 L87.3 177.4 L94.9 177.4 L102.5 169.2 L110.1 98.3 L117.7 94.5 L125.3 99.2 L132.9 93.7 L140.5 92.5 L148.0 95.2 L155.6 96.4 L163.2 106.5 L170.8 94.4 L178.4 84.7 L186.0 99.2 L193.6 105.0 L201.2 92.3 L208.8 103.7 L216.4 99.3 L224.0 90.6 L231.6 98.8 L239.2 106.5 L246.8 94.9 L254.4 97.3 L262.0 136.1 L269.6 176.0 L277.2 177.2 L284.8 177.4 L292.4 177.4 L300.0 177.4 L307.5 177.4 L315.1 177.4 L322.7 177.4 L330.3 177.4 L337.9 177.4 L345.5 177.4 L353.1 177.4 L360.7 177.4 L368.3 177.4 L375.9 177.4 L383.5 177.4 L391.1 177.4 L398.7 177.4 L406.3 177.4 L413.9 177.4 L421.5 177.4 L429.1 177.4 L436.7 177.4 L444.3 177.4 L451.9 177.4 L459.4 177.4 L467.0 177.4 L474.6 177.4 L482.2 177.4 L489.8 177.4 L497.4 177.4 L505.0 177.4 L512.6 177.4 L520.2 177.4 L527.8 177.4 L535.4 177.4 L543.0 177.4 L550.6 177.4 L550.6 177.1 L64.5 177.1 Z" fill="#447ebc" fill-opacity="0.09" stroke="none"/>
<path d="M64.5 177.4 L72.1 177.4 L79.7 177.4 L87.3 177.4 L94.9 177.4 L102.5 169.2 L110.1 98.3 L117.7 94.5 L125.3 99.2 L132.9 93.7 L140.5 92.5 L148.0 95.2 L155.6 96.4 L163.2 106.5 L170.8 94.4 L178.4 84.7 L186.0 99.2 L193.6 105.0 L201.2 92.3 L208.8 103.7 L216.4 99.3 L224.0 90.6 L231.6 98.8 L239.2 106.5 L246.8 94.9 L254.4 97.3 L262.0 136.1 L269.6 176.0 L277.2 177.2 L284.8 177.4 L292.4 177.4 L300.0 177.4 L307.5 177.4 L315.1 177.4 L322.7 177.4 L330.3 177.4 L337.9 177.4 L345.5 177.4 L353.1 177.4 L360.7 177.4 L368.3 177.4 L375.9 177.4 L383.5 177.4 L391.1 177.4 L398.7 177.4 L406.3 177.4 L413.9 177.4 L421.5 177.4 L429.1 177.4 L436.7 177.4 L444.3 177.4 L451.9 177.4 L459.4 177.4 L467.0 177.4 L474.6 177.4 L482.2 177.4 L489.8 177.4 L497.4 177.4 L505.0 177.4 L512.6 177.4 L520.2 177.4 L527.8 177.4 L535.4 177.4 L543.0 177.4 L550.6 177.4" fill="none" stroke="#447EBC" stroke-width="1" stroke-linejoin="round"/>
<path d="M64.5 177.4 L72.1 177.4 L79.7 177.4 L87.3 177.4 L94.9 177.4 L102.5 176.2 L110.1 176.7 L117.7 176.5 L125.3 176.2 L132.9 176.3 L140.5 176.8 L148.0 176.8 L155.6 176.6 L163.2 176.9 L170.8 176.7 L178.4 176.9 L186.0 176.4 L193.6 176.3 L201.2 176.2 L208.8 176.8 L216.4 176.4 L224.0 176.4 L231.6 176.8 L239.2 176.2 L246.8 176.2 L254.4 176.8 L262.0 176.2 L269.6 177.4 L277.2 177.4 L284.8 177.4 L292.4 177.4 L300.0 177.4 L307.5 177.4 L315.1 177.4 L322.7 177.4 L330.3 177.4 L337.9 177.4 L345.5 177.4 L353.1 177.4 L360.7 177.4 L368.3 177.4 L375.9 177.4 L383.5 177.4 L391.1 177.4 L398.7 177.4 L406.3 177.4 L413.9 177.4 L421.5 177.4 L429.1 177.4 L436.7 177.4 L444.3 177.4 L451.9 177.4 L459.4 176.0 L467.0 175.5 L474.6 176.5 L482.2 176.9 L489.8 177.4 L497.4 177.4 L505.0 176.6 L512.6 176.1 L520.2 176.8 L527.8 177.4 L535.4 177.4 L543.0 177.4 L550.6 177.4 L550.6 177.1 L64.5 177.1 Z" fill="#a45c17" fill-opacity="0.09" stroke="none"/>
<path d="M64.5 177.4 L72.1 177.4 L79.7 177.4 L87.3 177.4 L94.9 177.4 L102.5 176.2 L110.1 176.7 L117.7 176.5 L125.3 176.2 L132.9 176.3 L140.5 176.8 L148.0 176.8 L155.6 176.6 L163.2 176.9 L170.8 176.7 L178.4 176.9 L186.0 176.4 L193.6 176.3 L201.2 176.2 L208.8 176.8 L216.4 176.4 L224.0 176.4 L231.6 176.8 L239.2 176.2 L246.8 176.2 L254.4 176.8 L262.0 176.2 L269.6 177.4 L277.2 177.4 L284.8 177.4 L292.4 177.4 L300.0 177.4 L307.5 177.4 L315.1 177.4 L322.7 177.4 L330.3 177.4 L337.9 177.4 L345.5 177.4 L353.1 177.4 L360.7 177.4 L368.3 177.4 L375.9 177.4 L383.5 177.4 L391.1 177.4 L398.7 177.4 L406.3 177.4 L413.9 177.4 L421.5 177.4 L429.1 177.4 L436.7 177.4 L444.3 177.4 L451.9 177.4 L459.4 176.0 L467.0 175.5 L474.6 176.5 L482.2 176.9 L489.8 177.4 L497.4 177.4 L505.0 176.6 L512.6 176.1 L520.2 176.8 L527.8 177.4 L535.4 177.4 L543.0 177.4 L550.6 177.4" fill="none" stroke="#C15C17" stroke-width="1" stroke-linejoin="round"/>
<text x="21.90" y="181.3" font-size="12.2" textLength="35.00" lengthAdjust="spacingAndGlyphs">0 kB/s</text>
<text x="10.60" y="149.8" font-size="12.2" textLength="46.30" lengthAdjust="spacingAndGlyphs">20 MB/s</text>
<text x="10.30" y="118.3" font-size="12.2" textLength="46.60" lengthAdjust="spacingAndGlyphs">40 MB/s</text>
<text x="10.40" y="86.8" font-size="12.2" textLength="46.50" lengthAdjust="spacingAndGlyphs">60 MB/s</text>
<text x="10.40" y="55.3" font-size="12.2" textLength="46.50" lengthAdjust="spacingAndGlyphs">80 MB/s</text>
<text x="64.5" y="196.0" font-size="12.0" text-anchor="middle">15:04</text>
<text x="155.6" y="196.0" font-size="12.0" text-anchor="middle">15:06</text>
<text x="246.8" y="196.0" font-size="12.0" text-anchor="middle">15:08</text>
<text x="337.9" y="196.0" font-size="12.0" text-anchor="middle">15:10</text>
<text x="429.1" y="196.0" font-size="12.0" text-anchor="middle">15:12</text>
<text x="520.2" y="196.0" font-size="12.0" text-anchor="middle">15:14</text>
<rect x="19.0" y="217.0" width="14" height="4" rx="1" fill="#8ab97b"/><rect x="20.0" y="218.0" width="12" height="2" fill="#7EB26D"/>
<text x="47.20" y="221.20" font-size="12.4" textLength="21.10" lengthAdjust="spacingAndGlyphs">sdb</text>
<rect x="85.0" y="217.0" width="14" height="4" rx="1" fill="#ecbf4c"/><rect x="86.0" y="218.0" width="12" height="2" fill="#EAB839"/>
<text x="112.70" y="221.20" font-size="12.4" textLength="20.40" lengthAdjust="spacingAndGlyphs">sdc</text>
<rect x="149.0" y="217.0" width="14" height="4" rx="1" fill="#7cd4e3"/><rect x="150.0" y="218.0" width="12" height="2" fill="#6ED0E0"/>
<text x="177.70" y="221.20" font-size="12.4" textLength="20.80" lengthAdjust="spacingAndGlyphs">sdd</text>
<rect x="215.0" y="217.0" width="14" height="4" rx="1" fill="#f0904f"/><rect x="216.0" y="218.0" width="12" height="2" fill="#EF843C"/>
<text x="243.40" y="221.20" font-size="12.4" textLength="20.40" lengthAdjust="spacingAndGlyphs">sde</text>
<rect x="280.0" y="217.0" width="14" height="4" rx="1" fill="#e45e54"/><rect x="281.0" y="218.0" width="12" height="2" fill="#E24D42"/>
<text x="308.40" y="221.20" font-size="12.4" textLength="17.60" lengthAdjust="spacingAndGlyphs">sdf</text>
<rect x="342.1" y="217.0" width="14" height="4" rx="1" fill="#3585c7"/><rect x="343.1" y="218.0" width="12" height="2" fill="#1F78C1"/>
<text x="370.60" y="221.20" font-size="12.4" textLength="21.00" lengthAdjust="spacingAndGlyphs">sdg</text>
<rect x="407.9" y="217.0" width="14" height="4" rx="1" fill="#c055b1"/><rect x="408.9" y="218.0" width="12" height="2" fill="#BA43A9"/>
<text x="436.30" y="221.20" font-size="12.4" textLength="20.60" lengthAdjust="spacingAndGlyphs">sdh</text>
<rect x="473.0" y="217.0" width="14" height="4" rx="1" fill="#7e6da9"/><rect x="474.0" y="218.0" width="12" height="2" fill="#705DA0"/>
<text x="501.30" y="221.20" font-size="12.4" textLength="16.30" lengthAdjust="spacingAndGlyphs">sdi</text>
<rect x="19.0" y="238.0" width="14" height="4" rx="1" fill="#619254"/><rect x="20.0" y="239.0" width="12" height="2" fill="#508642"/>
<text x="47.20" y="242.20" font-size="12.4" textLength="16.60" lengthAdjust="spacingAndGlyphs">sdj</text>
<rect x="80.0" y="238.0" width="14" height="4" rx="1" fill="#d1ac19"/><rect x="81.0" y="239.0" width="12" height="2" fill="#CCA300"/>
<text x="108.40" y="242.20" font-size="12.4" textLength="19.60" lengthAdjust="spacingAndGlyphs">sdk</text>
<rect x="145.0" y="238.0" width="14" height="4" rx="1" fill="#568ac2"/><rect x="146.0" y="239.0" width="12" height="2" fill="#447EBC"/>
<text x="172.70" y="242.20" font-size="12.4" textLength="16.50" lengthAdjust="spacingAndGlyphs">sdl</text>
<rect x="205.9" y="238.0" width="14" height="4" rx="1" fill="#c76c2e"/><rect x="206.9" y="239.0" width="12" height="2" fill="#C15C17"/>
<text x="233.60" y="242.20" font-size="12.4" textLength="20.40" lengthAdjust="spacingAndGlyphs">sda</text>
</svg></section>
<section class="panel" style="left:597px;top:365px">
<h2 class="title" style="margin:0;font-weight:normal;left:231.95px;top:8.97px;font-size:14.80px;transform:scaleX(0.9787);-webkit-text-stroke:0.3px #ccccdc">Per Disk BW read</h2>
<svg width="581" height="258" viewBox="0 0 581 258">
<path d="M63.0 177.5 H555.3 M63.0 135.5 H555.3 M63.0 93.5 H555.3 M63.0 51.5 H555.3" stroke="rgba(149,189,181,0.25)" stroke-width="1" fill="none" shape-rendering="crispEdges"/>
<path d="M64.5 51.0 V178.0 M155.5 51.0 V178.0 M246.5 51.0 V178.0 M337.5 51.0 V178.0 M429.5 51.0 V178.0 M520.5 51.0 V178.0" stroke="rgba(149,189,181,0.25)" stroke-width="1" fill="none" shape-rendering="crispEdges"/>
<path d="M64.5 177.4 L72.1 177.4 L79.7 177.4 L87.3 177.4 L94.9 177.4 L102.5 177.4 L110.1 177.4 L117.7 177.4 L125.3 177.4 L132.9 177.4 L140.5 177.4 L148.0 177.4 L155.6 177.4 L163.2 177.4 L170.8 177.4 L178.4 177.4 L186.0 177.4 L193.6 177.4 L201.2 177.4 L208.8 177.4 L216.4 177.4 L224.0 177.4 L231.6 177.4 L239.2 177.4 L246.8 177.4 L254.4 173.4 L262.0 151.7 L269.6 141.9 L277.2 148.6 L284.8 152.2 L292.4 146.6 L300.0 144.2 L307.5 141.5 L315.1 151.7 L322.7 152.0 L330.3 143.2 L337.9 144.2 L345.5 139.6 L353.1 142.0 L360.7 146.8 L368.3 147.5 L375.9 135.0 L383.5 145.5 L391.1 147.7 L398.7 149.2 L406.3 143.8 L413.9 143.6 L421.5 145.7 L429.1 144.5 L436.7 145.1 L444.3 158.2 L451.9 172.3 L459.4 177.0 L467.0 177.4 L474.6 177.4 L482.2 177.4 L489.8 177.4 L497.4 177.4 L505.0 177.4 L512.6 177.4 L520.2 177.4 L527.8 177.4 L535.4 177.4 L543.0 177.4 L550.6 177.4 L550.6 177.1 L64.5 177.1 Z" fill="#7eb26d" fill-opacity="0.09" stroke="none"/>
<path d="M64.5 177.4 L72.1 177.4 L79.7 177.4 L87.3 177.4 L94.9 177.4 L102.5 177.4 L110.1 177.4 L117.7 177.4 L125.3 177.4 L132.9 177.4 L140.5 177.4 L148.0 177.4 L155.6 177.4 L163.2 177.4 L170.8 177.4 L178.4 177.4 L186.0 177.4 L193.6 177.4 L201.2 177.4 L208.8 177.4 L216.4 177.4 L224.0 177.4 L231.6 177.4 L239.2 177.4 L246.8 177.4 L254.4 173.4 L262.0 151.7 L269.6 141.9 L277.2 148.6 L284.8 152.2 L292.4 146.6 L300.0 144.2 L307.5 141.5 L315.1 151.7 L322.7 152.0 L330.3 143.2 L337.9 144.2 L345.5 139.6 L353.1 142.0 L360.7 146.8 L368.3 147.5 L375.9 135.0 L383.5 145.5 L391.1 147.7 L398.7 149.2 L406.3 143.8 L413.9 143.6 L421.5 145.7 L429.1 144.5 L436.7 145.1 L444.3 158.2 L451.9 172.3 L459.4 177.0 L467.0 177.4 L474.6 177.4 L482.2 177.4 L489.8 177.4 L497.4 177.4 L505.0 177.4 L512.6 177.4 L520.2 177.4 L527.8 177.4 L535.4 177.4 L543.0 177.4 L550.6 177.4" fill="none" stroke="#7EB26D" stroke-width="1" stroke-linejoin="round"/>
<path d="M64.5 177.4 L72.1 177.4 L79.7 177.4 L87.3 177.4 L94.9 177.4 L102.5 177.4 L110.1 177.4 L117.7 177.4 L125.3 177.4 L132.9 177.4 L140.5 177.4 L148.0 177.4 L155.6 177.4 L163.2 177.4 L170.8 177.4 L178.4 177.4 L186.0 177.4 L193.6 177.4 L201.2 177.4 L208.8 177.4 L216.4 177.4 L224.0 177.4 L231.6 177.4 L239.2 177.4 L246.8 177.4 L254.4 173.4 L262.0 149.3 L269.6 143.3 L277.2 152.6 L284.8 147.1 L292.4 152.8 L300.0 146.3 L307.5 149.8 L315.1 145.4 L322.7 131.8 L330.3 146.5 L337.9 142.6 L345.5 152.2 L353.1 147.6 L360.7 143.4 L368.3 146.7 L375.9 144.7 L383.5 143.8 L391.1 148.7 L398.7 141.7 L406.3 147.8 L413.9 136.0 L421.5 146.4 L429.1 141.2 L436.7 146.3 L444.3 150.9 L451.9 172.3 L459.4 177.0 L467.0 177.4 L474.6 177.4 L482.2 177.4 L489.8 177.4 L497.4 177.4 L505.0 177.4 L512.6 177.4 L520.2 177.4 L527.8 177.4 L535.4 177.4 L543.0 177.4 L550.6 177.4 L550.6 177.1 L64.5 177.1 Z" fill="#c6b839" fill-opacity="0.09" stroke="none"/>
<path d="M64.5 177.4 L72.1 177.4 L79.7 177.4 L87.3 177.4 L94.9 177.4 L102.5 177.4 L110.1 177.4 L117.7 177.4 L125.3 177.4 L132.9 177.4 L140.5 177.4 L148.0 177.4 L155.6 177.4 L163.2 177.4 L170.8 177.4 L178.4 177.4 L186.0 177.4 L193.6 177.4 L201.2 177.4 L208.8 177.4 L216.4 177.4 L224.0 177.4 L231.6 177.4 L239.2 177.4 L246.8 177.4 L254.4 173.4 L262.0 149.3 L269.6 143.3 L277.2 152.6 L284.8 147.1 L292.4 152.8 L300.0 146.3 L307.5 149.8 L315.1 145.4 L322.7 131.8 L330.3 146.5 L337.9 142.6 L345.5 152.2 L353.1 147.6 L360.7 143.4 L368.3 146.7 L375.9 144.7 L383.5 143.8 L391.1 148.7 L398.7 141.7 L406.3 147.8 L413.9 136.0 L421.5 146.4 L429.1 141.2 L436.7 146.3 L444.3 150.9 L451.9 172.3 L459.4 177.0 L467.0 177.4 L474.6 177.4 L482.2 177.4 L489.8 177.4 L497.4 177.4 L505.0 177.4 L512.6 177.4 L520.2 177.4 L527.8 177.4 L535.4 177.4 L543.0 177.4 L550.6 177.4" fill="none" stroke="#EAB839" stroke-width="1" stroke-linejoin="round"/>
<path d="M64.5 177.4 L72.1 177.4 L79.7 177.4 L87.3 177.4 L94.9 177.4 L102.5 177.4 L110.1 177.4 L117.7 177.4 L125.3 177.4 L132.9 177.4 L140.5 177.4 L148.0 177.4 L155.6 177.4 L163.2 177.4 L170.8 177.4 L178.4 177.4 L186.0 177.4 L193.6 177.4 L201.2 177.4 L208.8 177.4 L216.4 177.4 L224.0 177.4 L231.6 177.4 L239.2 177.4 L246.8 177.4 L254.4 171.2 L262.0 153.1 L269.6 138.3 L277.2 143.6 L284.8 145.7 L292.4 149.8 L300.0 142.9 L307.5 144.3 L315.1 139.1 L322.7 148.0 L330.3 143.9 L337.9 144.1 L345.5 145.1 L353.1 145.4 L360.7 145.5 L368.3 149.0 L375.9 150.8 L383.5 146.0 L391.1 141.6 L398.7 137.6 L406.3 139.9 L413.9 139.6 L421.5 140.8 L429.1 141.1 L436.7 145.5 L444.3 150.3 L451.9 170.9 L459.4 177.0 L467.0 177.4 L474.6 177.4 L482.2 177.4 L489.8 177.4 L497.4 177.4 L505.0 177.4 L512.6 177.4 L520.2 177.4 L527.8 177.4 L535.4 177.4 L543.0 177.4 L550.6 177.4 L550.6 177.1 L64.5 177.1 Z" fill="#6ed0e0" fill-opacity="0.09" stroke="none"/>
<path d="M64.5 177.4 L72.1 177.4 L79.7 177.4 L87.3 177.4 L94.9 177.4 L102.5 177.4 L110.1 177.4 L117.7 177.4 L125.3 177.4 L132.9 177.4 L140.5 177.4 L148.0 177.4 L155.6 177.4 L163.2 177.4 L170.8 177.4 L178.4 177.4 L186.0 177.4 L193.6 177.4 L201.2 177.4 L208.8 177.4 L216.4 177.4 L224.0 177.4 L231.6 177.4 L239.2 177.4 L246.8 177.4 L254.4 171.2 L262.0 153.1 L269.6 138.3 L277.2 143.6 L284.8 145.7 L292.4 149.8 L300.0 142.9 L307.5 144.3 L315.1 139.1 L322.7 148.0 L330.3 143.9 L337.9 144.1 L345.5 145.1 L353.1 145.4 L360.7 145.5 L368.3 149.0 L375.9 150.8 L383.5 146.0 L391.1 141.6 L398.7 137.6 L406.3 139.9 L413.9 139.6 L421.5 140.8 L429.1 141.1 L436.7 145.5 L444.3 150.3 L451.9 170.9 L459.4 177.0 L467.0 177.4 L474.6 177.4 L482.2 177.4 L489.8 177.4 L497.4 177.4 L505.0 177.4 L512.6 177.4 L520.2 177.4 L527.8 177.4 L535.4 177.4 L543.0 177.4 L550.6 177.4" fill="none" stroke="#6ED0E0" stroke-width="1" stroke-linejoin="round"/>
<path d="M64.5 177.4 L72.1 177.4 L79.7 177.4 L87.3 177.4 L94.9 177.4 L102.5 177.4 L110.1 177.4 L117.7 177.4 L125.3 177.4 L132.9 177.4 L140.5 177.4 L148.0 177.4 L155.6 177.4 L163.2 177.4 L170.8 177.4 L178.4 177.4 L186.0 177.4 L193.6 177.4 L201.2 177.4 L208.8 177.4 L216.4 177.4 L224.0 177.4 L231.6 177.4 L239.2 177.4 L246.8 177.4 L254.4 174.0 L262.0 149.0 L269.6 142.9 L277.2 145.2 L284.8 142.0 L292.4 142.5 L300.0 151.3 L307.5 135.6 L315.1 138.5 L322.7 145.5 L330.3 143.0 L337.9 145.8 L345.5 150.2 L353.1 146.8 L360.7 144.7 L368.3 141.4 L375.9 143.2 L383.5 144.0 L391.1 138.2 L398.7 147.6 L406.3 140.7 L413.9 139.3 L421.5 145.5 L429.1 152.1 L436.7 150.3 L444.3 157.0 L451.9 173.6 L459.4 177.0 L467.0 177.4 L474.6 177.4 L482.2 177.4 L489.8 177.4 L497.4 177.4 L505.0 177.4 L512.6 177.4 L520.2 177.4 L527.8 177.4 L535.4 177.4 L543.0 177.4 L550.6 177.4 L550.6 177.1 L64.5 177.1 Z" fill="#cb843c" fill-opacity="0.09" stroke="none"/>
<path d="M64.5 177.4 L72.1 177.4 L79.7 177.4 L87.3 177.4 L94.9 177.4 L102.5 177.4 L110.1 177.4 L117.7 177.4 L125.3 177.4 L132.9 177.4 L140.5 177.4 L148.0 177.4 L155.6 177.4 L163.2 177.4 L170.8 177.4 L178.4 177.4 L186.0 177.4 L193.6 177.4 L201.2 177.4 L208.8 177.4 L216.4 177.4 L224.0 177.4 L231.6 177.4 L239.2 177.4 L246.8 177.4 L254.4 174.0 L262.0 149.0 L269.6 142.9 L277.2 145.2 L284.8 142.0 L292.4 142.5 L300.0 151.3 L307.5 135.6 L315.1 138.5 L322.7 145.5 L330.3 143.0 L337.9 145.8 L345.5 150.2 L353.1 146.8 L360.7 144.7 L368.3 141.4 L375.9 143.2 L383.5 144.0 L391.1 138.2 L398.7 147.6 L406.3 140.7 L413.9 139.3 L421.5 145.5 L429.1 152.1 L436.7 150.3 L444.3 157.0 L451.9 173.6 L459.4 177.0 L467.0 177.4 L474.6 177.4 L482.2 177.4 L489.8 177.4 L497.4 177.4 L505.0 177.4 L512.6 177.4 L520.2 177.4 L527.8 177.4 L535.4 177.4 L543.0 177.4 L550.6 177.4" fill="none" stroke="#EF843C" stroke-width="1" stroke-linejoin="round"/>
<path d="M64.5 177.4 L72.1 177.4 L79.7 177.4 L87.3 177.4 L94.9 177.4 L102.5 177.4 L110.1 177.4 L117.7 177.4 L125.3 177.4 L132.9 177.4 L140.5 177.4 L148.0 177.4 L155.6 177.4 L163.2 177.4 L170.8 177.4 L178.4 177.4 L186.0 177.4 L193.6 177.4 L201.2 177.4 L208.8 177.4 L216.4 177.4 L224.0 177.4 L231.6 177.4 L239.2 177.4 L246.8 177.4 L254.4 171.5 L262.0 149.5 L269.6 146.3 L277.2 143.5 L284.8 147.0 L292.4 156.8 L300.0 142.8 L307.5 136.1 L315.1 141.9 L322.7 150.4 L330.3 148.1 L337.9 137.5 L345.5 135.3 L353.1 143.6 L360.7 145.8 L368.3 139.5 L375.9 146.7 L383.5 136.0 L391.1 147.2 L398.7 146.3 L406.3 141.0 L413.9 137.9 L421.5 141.3 L429.1 142.9 L436.7 154.4 L444.3 153.3 L451.9 173.1 L459.4 177.0 L467.0 177.4 L474.6 177.4 L482.2 177.4 L489.8 177.4 L497.4 177.4 L505.0 177.4 L512.6 177.4 L520.2 177.4 L527.8 177.4 L535.4 177.4 L543.0 177.4 L550.6 177.4 L550.6 177.1 L64.5 177.1 Z" fill="#c04d42" fill-opacity="0.09" stroke="none"/>
<path d="M64.5 177.4 L72.1 177.4 L79.7 177.4 L87.3 177.4 L94.9 177.4 L102.5 177.4 L110.1 177.4 L117.7 177.4 L125.3 177.4 L132.9 177.4 L140.5 177.4 L148.0 177.4 L155.6 177.4 L163.2 177.4 L170.8 177.4 L178.4 177.4 L186.0 177.4 L193.6 177.4 L201.2 177.4 L208.8 177.4 L216.4 177.4 L224.0 177.4 L231.6 177.4 L239.2 177.4 L246.8 177.4 L254.4 171.5 L262.0 149.5 L269.6 146.3 L277.2 143.5 L284.8 147.0 L292.4 156.8 L300.0 142.8 L307.5 136.1 L315.1 141.9 L322.7 150.4 L330.3 148.1 L337.9 137.5 L345.5 135.3 L353.1 143.6 L360.7 145.8 L368.3 139.5 L375.9 146.7 L383.5 136.0 L391.1 147.2 L398.7 146.3 L406.3 141.0 L413.9 137.9 L421.5 141.3 L429.1 142.9 L436.7 154.4 L444.3 153.3 L451.9 173.1 L459.4 177.0 L467.0 177.4 L474.6 177.4 L482.2 177.4 L489.8 177.4 L497.4 177.4 L505.0 177.4 L512.6 177.4 L520.2 177.4 L527.8 177.4 L535.4 177.4 L543.0 177.4 L550.6 177.4" fill="none" stroke="#E24D42" stroke-width="1" stroke-linejoin="round"/>
<path d="M64.5 177.4 L72.1 177.4 L79.7 177.4 L87.3 177.4 L94.9 177.4 L102.5 177.4 L110.1 177.4 L117.7 177.4 L125.3 177.4 L132.9 177.4 L140.5 177.4 L148.0 177.4 L155.6 177.4 L163.2 177.4 L170.8 177.4 L178.4 177.4 L186.0 177.4 L193.6 177.4 L201.2 177.4 L208.8 177.4 L216.4 177.4 L224.0 177.4 L231.6 177.4 L239.2 177.4 L246.8 177.4 L254.4 171.4 L262.0 154.7 L269.6 149.5 L277.2 142.8 L284.8 146.0 L292.4 147.8 L300.0 145.8 L307.5 144.4 L315.1 142.5 L322.7 148.4 L330.3 147.3 L337.9 152.3 L345.5 139.2 L353.1 139.9 L360.7 147.1 L368.3 148.4 L375.9 151.8 L383.5 137.5 L391.1 143.3 L398.7 135.0 L406.3 143.1 L413.9 147.7 L421.5 155.0 L429.1 138.0 L436.7 145.5 L444.3 154.4 L451.9 171.2 L459.4 177.0 L467.0 177.4 L474.6 177.4 L482.2 177.4 L489.8 177.4 L497.4 177.4 L505.0 177.4 L512.6 177.4 L520.2 177.4 L527.8 177.4 L535.4 177.4 L543.0 177.4 L550.6 177.4 L550.6 177.1 L64.5 177.1 Z" fill="#1f78c1" fill-opacity="0.09" stroke="none"/>
<path d="M64.5 177.4 L72.1 177.4 L79.7 177.4 L87.3 177.4 L94.9 177.4 L102.5 177.4 L110.1 177.4 L117.7 177.4 L125.3 177.4 L132.9 177.4 L140.5 177.4 L148.0 177.4 L155.6 177.4 L163.2 177.4 L170.8 177.4 L178.4 177.4 L186.0 177.4 L193.6 177.4 L201.2 177.4 L208.8 177.4 L216.4 177.4 L224.0 177.4 L231.6 177.4 L239.2 177.4 L246.8 177.4 L254.4 171.4 L262.0 154.7 L269.6 149.5 L277.2 142.8 L284.8 146.0 L292.4 147.8 L300.0 145.8 L307.5 144.4 L315.1 142.5 L322.7 148.4 L330.3 147.3 L337.9 152.3 L345.5 139.2 L353.1 139.9 L360.7 147.1 L368.3 148.4 L375.9 151.8 L383.5 137.5 L391.1 143.3 L398.7 135.0 L406.3 143.1 L413.9 147.7 L421.5 155.0 L429.1 138.0 L436.7 145.5 L444.3 154.4 L451.9 171.2 L459.4 177.0 L467.0 177.4 L474.6 177.4 L482.2 177.4 L489.8 177.4 L497.4 177.4 L505.0 177.4 L512.6 177.4 L520.2 177.4 L527.8 177.4 L535.4 177.4 L543.0 177.4 L550.6 177.4" fill="none" stroke="#1F78C1" stroke-width="1" stroke-linejoin="round"/>
<path d="M64.5 177.4 L72.1 177.4 L79.7 177.4 L87.3 177.4 L94.9 177.4 L102.5 168.2 L110.1 64.6 L117.7 76.0 L125.3 61.9 L132.9 65.0 L140.5 61.9 L148.0 59.2 L155.6 70.3 L163.2 59.6 L170.8 82.9 L178.4 75.5 L186.0 78.1 L193.6 61.3 L201.2 68.8 L208.8 62.5 L216.4 57.9 L224.0 56.7 L231.6 65.0 L239.2 63.8 L246.8 59.4 L254.4 77.4 L262.0 131.6 L269.6 177.4 L277.2 177.4 L284.8 177.4 L292.4 177.4 L300.0 177.4 L307.5 177.4 L315.1 177.4 L322.7 177.4 L330.3 177.4 L337.9 177.4 L345.5 177.4 L353.1 177.4 L360.7 177.4 L368.3 177.4 L375.9 177.4 L383.5 177.4 L391.1 177.4 L398.7 177.4 L406.3 177.4 L413.9 177.4 L421.5 177.4 L429.1 177.4 L436.7 177.4 L444.3 177.4 L451.9 177.4 L459.4 177.4 L467.0 177.4 L474.6 177.4 L482.2 177.4 L489.8 177.4 L497.4 177.4 L505.0 177.4 L512.6 177.4 L520.2 177.4 L527.8 177.4 L535.4 177.4 L543.0 177.4 L550.6 177.4 L550.6 177.1 L64.5 177.1 Z" fill="#ba43a9" fill-opacity="0.09" stroke="none"/>
<path d="M64.5 177.4 L72.1 177.4 L79.7 177.4 L87.3 177.4 L94.9 177.4 L102.5 168.2 L110.1 64.6 L117.7 76.0 L125.3 61.9 L132.9 65.0 L140.5 61.9 L148.0 59.2 L155.6 70.3 L163.2 59.6 L170.8 82.9 L178.4 75.5 L186.0 78.1 L193.6 61.3 L201.2 68.8 L208.8 62.5 L216.4 57.9 L224.0 56.7 L231.6 65.0 L239.2 63.8 L246.8 59.4 L254.4 77.4 L262.0 131.6 L269.6 177.4 L277.2 177.4 L284.8 177.4 L292.4 177.4 L300.0 177.4 L307.5 177.4 L315.1 177.4 L322.7 177.4 L330.3 177.4 L337.9 177.4 L345.5 177.4 L353.1 177.4 L360.7 177.4 L368.3 177.4 L375.9 177.4 L383.5 177.4 L391.1 177.4 L398.7 177.4 L406.3 177.4 L413.9 177.4 L421.5 177.4 L429.1 177.4 L436.7 177.4 L444.3 177.4 L451.9 177.4 L459.4 177.4 L467.0 177.4 L474.6 177.4 L482.2 177.4 L489.8 177.4 L497.4 177.4 L505.0 177.4 L512.6 177.4 L520.2 177.4 L527.8 177.4 L535.4 177.4 L543.0 177.4 L550.6 177.4" fill="none" stroke="#BA43A9" stroke-width="1" stroke-linejoin="round"/>
<path d="M64.5 177.4 L72.1 177.4 L79.7 177.4 L87.3 177.4 L94.9 177.4 L102.5 177.4 L110.1 177.4 L117.7 177.4 L125.3 177.4 L132.9 177.4 L140.5 177.4 L148.0 177.4 L155.6 177.4 L163.2 177.4 L170.8 177.4 L178.4 177.4 L186.0 177.4 L193.6 177.4 L201.2 177.4 L208.8 177.4 L216.4 177.4 L224.0 177.4 L231.6 177.4 L239.2 177.4 L246.8 177.4 L254.4 174.0 L262.0 148.0 L269.6 141.4 L277.2 143.8 L284.8 147.1 L292.4 137.9 L300.0 146.9 L307.5 153.2 L315.1 143.7 L322.7 155.8 L330.3 150.3 L337.9 140.9 L345.5 139.1 L353.1 151.5 L360.7 153.1 L368.3 142.4 L375.9 142.6 L383.5 148.6 L391.1 147.3 L398.7 147.3 L406.3 149.5 L413.9 147.2 L421.5 138.7 L429.1 141.2 L436.7 137.3 L444.3 152.4 L451.9 172.6 L459.4 177.0 L467.0 177.4 L474.6 177.4 L482.2 177.4 L489.8 177.4 L497.4 177.4 L505.0 177.4 L512.6 177.4 L520.2 177.4 L527.8 177.4 L535.4 177.4 L543.0 177.4 L550.6 177.4 L550.6 177.1 L64.5 177.1 Z" fill="#705da0" fill-opacity="0.09" stroke="none"/>
<path d="M64.5 177.4 L72.1 177.4 L79.7 177.4 L87.3 177.4 L94.9 177.4 L102.5 177.4 L110.1 177.4 L117.7 177.4 L125.3 177.4 L132.9 177.4 L140.5 177.4 L148.0 177.4 L155.6 177.4 L163.2 177.4 L170.8 177.4 L178.4 177.4 L186.0 177.4 L193.6 177.4 L201.2 177.4 L208.8 177.4 L216.4 177.4 L224.0 177.4 L231.6 177.4 L239.2 177.4 L246.8 177.4 L254.4 174.0 L262.0 148.0 L269.6 141.4 L277.2 143.8 L284.8 147.1 L292.4 137.9 L300.0 146.9 L307.5 153.2 L315.1 143.7 L322.7 155.8 L330.3 150.3 L337.9 140.9 L345.5 139.1 L353.1 151.5 L360.7 153.1 L368.3 142.4 L375.9 142.6 L383.5 148.6 L391.1 147.3 L398.7 147.3 L406.3 149.5 L413.9 147.2 L421.5 138.7 L429.1 141.2 L436.7 137.3 L444.3 152.4 L451.9 172.6 L459.4 177.0 L467.0 177.4 L474.6 177.4 L482.2 177.4 L489.8 177.4 L497.4 177.4 L505.0 177.4 L512.6 177.4 L520.2 177.4 L527.8 177.4 L535.4 177.4 L543.0 177.4 L550.6 177.4" fill="none" stroke="#705DA0" stroke-width="1" stroke-linejoin="round"/>
<path d="M64.5 177.4 L72.1 177.4 L79.7 177.4 L87.3 177.4 L94.9 177.4 L102.5 177.4 L110.1 177.4 L117.7 177.4 L125.3 177.4 L132.9 177.4 L140.5 177.4 L148.0 177.4 L155.6 177.4 L163.2 177.4 L170.8 177.4 L178.4 177.4 L186.0 177.4 L193.6 177.4 L201.2 177.4 L208.8 177.4 L216.4 177.4 L224.0 177.4 L231.6 177.4 L239.2 177.4 L246.8 177.4 L254.4 172.2 L262.0 151.5 L269.6 146.7 L277.2 154.2 L284.8 143.2 L292.4 140.0 L300.0 142.6 L307.5 140.4 L315.1 145.2 L322.7 149.5 L330.3 145.9 L337.9 148.0 L345.5 151.2 L353.1 153.8 L360.7 152.9 L368.3 146.3 L375.9 145.7 L383.5 146.3 L391.1 137.9 L398.7 143.4 L406.3 141.6 L413.9 138.8 L421.5 147.8 L429.1 152.9 L436.7 143.0 L444.3 155.8 L451.9 171.5 L459.4 177.0 L467.0 177.4 L474.6 177.4 L482.2 177.4 L489.8 177.4 L497.4 177.4 L505.0 177.4 L512.6 177.4 L520.2 177.4 L527.8 177.4 L535.4 177.4 L543.0 177.4 L550.6 177.4 L550.6 177.1 L64.5 177.1 Z" fill="#508642" fill-opacity="0.09" stroke="none"/>
<path d="M64.5 177.4 L72.1 177.4 L79.7 177.4 L87.3 177.4 L94.9 177.4 L102.5 177.4 L110.1 177.4 L117.7 177.4 L125.3 177.4 L132.9 177.4 L140.5 177.4 L148.0 177.4 L155.6 177.4 L163.2 177.4 L170.8 177.4 L178.4 177.4 L186.0 177.4 L193.6 177.4 L201.2 177.4 L208.8 177.4 L216.4 177.4 L224.0 177.4 L231.6 177.4 L239.2 177.4 L246.8 177.4 L254.4 172.2 L262.0 151.5 L269.6 146.7 L277.2 154.2 L284.8 143.2 L292.4 140.0 L300.0 142.6 L307.5 140.4 L315.1 145.2 L322.7 149.5 L330.3 145.9 L337.9 148.0 L345.5 151.2 L353.1 153.8 L360.7 152.9 L368.3 146.3 L375.9 145.7 L383.5 146.3 L391.1 137.9 L398.7 143.4 L406.3 141.6 L413.9 138.8 L421.5 147.8 L429.1 152.9 L436.7 143.0 L444.3 155.8 L451.9 171.5 L459.4 177.0 L467.0 177.4 L474.6 177.4 L482.2 177.4 L489.8 177.4 L497.4 177.4 L505.0 177.4 L512.6 177.4 L520.2 177.4 L527.8 177.4 L535.4 177.4 L543.0 177.4 L550.6 177.4" fill="none" stroke="#508642" stroke-width="1" stroke-linejoin="round"/>
<path d="M64.5 177.4 L72.1 177.4 L79.7 177.4 L87.3 177.4 L94.9 177.4 L102.5 177.4 L110.1 177.4 L117.7 177.4 L125.3 177.4 L132.9 177.4 L140.5 177.4 L148.0 177.4 L155.6 177.4 L163.2 177.4 L170.8 177.4 L178.4 177.4 L186.0 177.4 L193.6 177.4 L201.2 177.4 L208.8 177.4 L216.4 177.4 L224.0 177.4 L231.6 177.4 L239.2 177.4 L246.8 177.4 L254.4 174.5 L262.0 152.8 L269.6 143.0 L277.2 155.5 L284.8 143.1 L292.4 149.3 L300.0 149.7 L307.5 148.2 L315.1 142.9 L322.7 142.4 L330.3 141.9 L337.9 157.4 L345.5 158.1 L353.1 156.8 L360.7 137.5 L368.3 143.7 L375.9 149.7 L383.5 143.1 L391.1 143.2 L398.7 139.8 L406.3 147.8 L413.9 147.9 L421.5 147.6 L429.1 136.5 L436.7 141.5 L444.3 157.9 L451.9 174.1 L459.4 177.0 L467.0 177.4 L474.6 177.4 L482.2 177.4 L489.8 177.4 L497.4 177.4 L505.0 177.4 L512.6 177.4 L520.2 177.4 L527.8 177.4 L535.4 177.4 L543.0 177.4 L550.6 177.4 L550.6 177.1 L64.5 177.1 Z" fill="#ada300" fill-opacity="0.09" stroke="none"/>
<path d="M64.5 177.4 L72.1 177.4 L79.7 177.4 L87.3 177.4 L94.9 177.4 L102.5 177.4 L110.1 177.4 L117.7 177.4 L125.3 177.4 L132.9 177.4 L140.5 177.4 L148.0 177.4 L155.6 177.4 L163.2 177.4 L170.8 177.4 L178.4 177.4 L186.0 177.4 L193.6 177.4 L201.2 177.4 L208.8 177.4 L216.4 177.4 L224.0 177.4 L231.6 177.4 L239.2 177.4 L246.8 177.4 L254.4 174.5 L262.0 152.8 L269.6 143.0 L277.2 155.5 L284.8 143.1 L292.4 149.3 L300.0 149.7 L307.5 148.2 L315.1 142.9 L322.7 142.4 L330.3 141.9 L337.9 157.4 L345.5 158.1 L353.1 156.8 L360.7 137.5 L368.3 143.7 L375.9 149.7 L383.5 143.1 L391.1 143.2 L398.7 139.8 L406.3 147.8 L413.9 147.9 L421.5 147.6 L429.1 136.5 L436.7 141.5 L444.3 157.9 L451.9 174.1 L459.4 177.0 L467.0 177.4 L474.6 177.4 L482.2 177.4 L489.8 177.4 L497.4 177.4 L505.0 177.4 L512.6 177.4 L520.2 177.4 L527.8 177.4 L535.4 177.4 L543.0 177.4 L550.6 177.4" fill="none" stroke="#CCA300" stroke-width="1" stroke-linejoin="round"/>
<path d="M64.5 177.4 L72.1 177.4 L79.7 177.4 L87.3 177.4 L94.9 177.4 L102.5 177.4 L110.1 177.4 L117.7 177.4 L125.3 177.4 L132.9 177.4 L140.5 177.4 L148.0 177.4 L155.6 177.4 L163.2 177.4 L170.8 177.4 L178.4 177.4 L186.0 177.4 L193.6 177.4 L201.2 177.4 L208.8 177.4 L216.4 177.4 L224.0 177.4 L231.6 177.4 L239.2 177.4 L246.8 177.4 L254.4 171.6 L262.0 156.1 L269.6 146.9 L277.2 147.8 L284.8 151.9 L292.4 149.2 L300.0 139.0 L307.5 144.0 L315.1 146.0 L322.7 147.3 L330.3 146.0 L337.9 144.8 L345.5 149.2 L353.1 145.5 L360.7 145.3 L368.3 149.6 L375.9 149.8 L383.5 148.6 L391.1 136.5 L398.7 140.3 L406.3 135.4 L413.9 145.4 L421.5 146.9 L429.1 136.9 L436.7 145.9 L444.3 158.4 L451.9 172.3 L459.4 177.0 L467.0 177.4 L474.6 177.4 L482.2 177.4 L489.8 177.4 L497.4 177.4 L505.0 177.4 L512.6 177.4 L520.2 177.4 L527.8 177.4 L535.4 177.4 L543.0 177.4 L550.6 177.4 L550.6 177.1 L64.5 177.1 Z" fill="#447ebc" fill-opacity="0.09" stroke="none"/>
<path d="M64.5 177.4 L72.1 177.4 L79.7 177.4 L87.3 177.4 L94.9 177.4 L102.5 177.4 L110.1 177.4 L117.7 177.4 L125.3 177.4 L132.9 177.4 L140.5 177.4 L148.0 177.4 L155.6 177.4 L163.2 177.4 L170.8 177.4 L178.4 177.4 L186.0 177.4 L193.6 177.4 L201.2 177.4 L208.8 177.4 L216.4 177.4 L224.0 177.4 L231.6 177.4 L239.2 177.4 L246.8 177.4 L254.4 171.6 L262.0 156.1 L269.6 146.9 L277.2 147.8 L284.8 151.9 L292.4 149.2 L300.0 139.0 L307.5 144.0 L315.1 146.0 L322.7 147.3 L330.3 146.0 L337.9 144.8 L345.5 149.2 L353.1 145.5 L360.7 145.3 L368.3 149.6 L375.9 149.8 L383.5 148.6 L391.1 136.5 L398.7 140.3 L406.3 135.4 L413.9 145.4 L421.5 146.9 L429.1 136.9 L436.7 145.9 L444.3 158.4 L451.9 172.3 L459.4 177.0 L467.0 177.4 L474.6 177.4 L482.2 177.4 L489.8 177.4 L497.4 177.4 L505.0 177.4 L512.6 177.4 L520.2 177.4 L527.8 177.4 L535.4 177.4 L543.0 177.4 L550.6 177.4" fill="none" stroke="#447EBC" stroke-width="1" stroke-linejoin="round"/>
<path d="M64.5 177.4 L72.1 177.4 L79.7 177.4 L87.3 177.4 L94.9 177.4 L102.5 177.4 L110.1 177.4 L117.7 177.4 L125.3 177.4 L132.9 177.4 L140.5 177.4 L148.0 177.4 L155.6 177.4 L163.2 177.4 L170.8 177.4 L178.4 177.4 L186.0 177.4 L193.6 177.4 L201.2 177.4 L208.8 177.4 L216.4 177.4 L224.0 177.4 L231.6 177.4 L239.2 177.4 L246.8 177.4 L254.4 177.4 L262.0 177.4 L269.6 177.4 L277.2 177.4 L284.8 177.4 L292.4 177.4 L300.0 177.4 L307.5 177.4 L315.1 177.4 L322.7 177.4 L330.3 177.4 L337.9 177.4 L345.5 177.4 L353.1 177.4 L360.7 177.4 L368.3 177.4 L375.9 177.4 L383.5 177.4 L391.1 177.4 L398.7 177.4 L406.3 177.4 L413.9 177.4 L421.5 177.4 L429.1 177.4 L436.7 177.4 L444.3 177.4 L451.9 177.4 L459.4 177.4 L467.0 177.4 L474.6 177.4 L482.2 177.4 L489.8 177.4 L497.4 177.4 L505.0 177.4 L512.6 177.4 L520.2 177.4 L527.8 177.4 L535.4 177.4 L543.0 177.4 L550.6 177.4 L550.6 177.1 L64.5 177.1 Z" fill="#a45c17" fill-opacity="0.09" stroke="none"/>
<path d="M64.5 177.4 L72.1 177.4 L79.7 177.4 L87.3 177.4 L94.9 177.4 L102.5 177.4 L110.1 177.4 L117.7 177.4 L125.3 177.4 L132.9 177.4 L140.5 177.4 L148.0 177.4 L155.6 177.4 L163.2 177.4 L170.8 177.4 L178.4 177.4 L186.0 177.4 L193.6 177.4 L201.2 177.4 L208.8 177.4 L216.4 177.4 L224.0 177.4 L231.6 177.4 L239.2 177.4 L246.8 177.4 L254.4 177.4 L262.0 177.4 L269.6 177.4 L277.2 177.4 L284.8 177.4 L292.4 177.4 L300.0 177.4 L307.5 177.4 L315.1 177.4 L322.7 177.4 L330.3 177.4 L337.9 177.4 L345.5 177.4 L353.1 177.4 L360.7 177.4 L368.3 177.4 L375.9 177.4 L383.5 177.4 L391.1 177.4 L398.7 177.4 L406.3 177.4 L413.9 177.4 L421.5 177.4 L429.1 177.4 L436.7 177.4 L444.3 177.4 L451.9 177.4 L459.4 177.4 L467.0 177.4 L474.6 177.4 L482.2 177.4 L489.8 177.4 L497.4 177.4 L505.0 177.4 L512.6 177.4 L520.2 177.4 L527.8 177.4 L535.4 177.4 L543.0 177.4 L550.6 177.4" fill="none" stroke="#C15C17" stroke-width="1" stroke-linejoin="round"/>
<text x="21.90" y="181.3" font-size="12.2" textLength="35.00" lengthAdjust="spacingAndGlyphs">0 kB/s</text>
<text x="10.60" y="139.3" font-size="12.2" textLength="46.30" lengthAdjust="spacingAndGlyphs">20 MB/s</text>
<text x="10.30" y="97.3" font-size="12.2" textLength="46.60" lengthAdjust="spacingAndGlyphs">40 MB/s</text>
<text x="10.40" y="55.3" font-size="12.2" textLength="46.50" lengthAdjust="spacingAndGlyphs">60 MB/s</text>
<text x="64.5" y="196.0" font-size="12.0" text-anchor="middle">15:04</text>
<text x="155.6" y="196.0" font-size="12.0" text-anchor="middle">15:06</text>
<text x="246.8" y="196.0" font-size="12.0" text-anchor="middle">15:08</text>
<text x="337.9" y="196.0" font-size="12.0" text-anchor="middle">15:10</text>
<text x="429.1" y="196.0" font-size="12.0" text-anchor="middle">15:12</text>
<text x="520.2" y="196.0" font-size="12.0" text-anchor="middle">15:14</text>
<rect x="19.0" y="217.0" width="14" height="4" rx="1" fill="#8ab97b"/><rect x="20.0" y="218.0" width="12" height="2" fill="#7EB26D"/>
<text x="47.20" y="221.20" font-size="12.4" textLength="21.10" lengthAdjust="spacingAndGlyphs">sdb</text>
<rect x="85.0" y="217.0" width="14" height="4" rx="1" fill="#ecbf4c"/><rect x="86.0" y="218.0" width="12" height="2" fill="#EAB839"/>
<text x="112.70" y="221.20" font-size="12.4" textLength="20.40" lengthAdjust="spacingAndGlyphs">sdc</text>
<rect x="149.0" y="217.0" width="14" height="4" rx="1" fill="#7cd4e3"/><rect x="150.0" y="218.0" width="12" height="2" fill="#6ED0E0"/>
<text x="177.70" y="221.20" font-size="12.4" textLength="20.80" lengthAdjust="spacingAndGlyphs">sdd</text>
<rect x="215.0" y="217.0" width="14" height="4" rx="1" fill="#f0904f"/><rect x="216.0" y="218.0" width="12" height="2" fill="#EF843C"/>
<text x="243.40" y="221.20" font-size="12.4" textLength="20.40" lengthAdjust="spacingAndGlyphs">sde</text>
<rect x="280.0" y="217.0" width="14" height="4" rx="1" fill="#e45e54"/><rect x="281.0" y="218.0" width="12" height="2" fill="#E24D42"/>
<text x="308.40" y="221.20" font-size="12.4" textLength="17.60" lengthAdjust="spacingAndGlyphs">sdf</text>
<rect x="342.1" y="217.0" width="14" height="4" rx="1" fill="#3585c7"/><rect x="343.1" y="218.0" width="12" height="2" fill="#1F78C1"/>
<text x="370.60" y="221.20" font-size="12.4" textLength="21.00" lengthAdjust="spacingAndGlyphs">sdg</text>
<rect x="407.9" y="217.0" width="14" height="4" rx="1" fill="#c055b1"/><rect x="408.9" y="218.0" width="12" height="2" fill="#BA43A9"/>
<text x="436.30" y="221.20" font-size="12.4" textLength="20.60" lengthAdjust="spacingAndGlyphs">sdh</text>
<rect x="473.0" y="217.0" width="14" height="4" rx="1" fill="#7e6da9"/><rect x="474.0" y="218.0" width="12" height="2" fill="#705DA0"/>
<text x="501.30" y="221.20" font-size="12.4" textLength="16.30" lengthAdjust="spacingAndGlyphs">sdi</text>
<rect x="19.0" y="238.0" width="14" height="4" rx="1" fill="#619254"/><rect x="20.0" y="239.0" width="12" height="2" fill="#508642"/>
<text x="47.20" y="242.20" font-size="12.4" textLength="16.60" lengthAdjust="spacingAndGlyphs">sdj</text>
<rect x="80.0" y="238.0" width="14" height="4" rx="1" fill="#d1ac19"/><rect x="81.0" y="239.0" width="12" height="2" fill="#CCA300"/>
<text x="108.40" y="242.20" font-size="12.4" textLength="19.60" lengthAdjust="spacingAndGlyphs">sdk</text>
<rect x="145.0" y="238.0" width="14" height="4" rx="1" fill="#568ac2"/><rect x="146.0" y="239.0" width="12" height="2" fill="#447EBC"/>
<text x="172.70" y="242.20" font-size="12.4" textLength="16.50" lengthAdjust="spacingAndGlyphs">sdl</text>
<rect x="205.9" y="238.0" width="14" height="4" rx="1" fill="#c76c2e"/><rect x="206.9" y="239.0" width="12" height="2" fill="#C15C17"/>
<text x="233.60" y="242.20" font-size="12.4" textLength="20.40" lengthAdjust="spacingAndGlyphs">sda</text>
</svg></section>
<section class="panel" style="left:1186px;top:365px">
<h2 class="title" style="margin:0;font-weight:normal;left:239.90px;top:8.97px;font-size:14.80px;transform:scaleX(1.0222);-webkit-text-stroke:0.3px #ccccdc">Disk Utilization</h2>
<svg width="581" height="258" viewBox="0 0 581 258">
<path d="M40.0 177.5 H555.3 M40.0 145.5 H555.3 M40.0 114.5 H555.3 M40.0 82.5 H555.3 M40.0 51.5 H555.3" stroke="rgba(149,189,181,0.25)" stroke-width="1" fill="none" shape-rendering="crispEdges"/>
<path d="M41.5 51.0 V178.0 M136.5 51.0 V178.0 M232.5 51.0 V178.0 M327.5 51.0 V178.0 M423.5 51.0 V178.0 M518.5 51.0 V178.0" stroke="rgba(149,189,181,0.25)" stroke-width="1" fill="none" shape-rendering="crispEdges"/>
<path d="M41.5 177.4 L49.5 177.4 L57.4 177.4 L65.4 177.4 L73.3 177.4 L81.3 177.4 L89.2 175.4 L97.2 175.4 L105.1 175.3 L113.1 175.2 L121.0 175.4 L129.0 175.2 L136.9 175.8 L144.9 175.5 L152.8 175.2 L160.8 175.4 L168.7 175.3 L176.7 175.8 L184.6 175.5 L192.6 175.7 L200.5 175.5 L208.5 175.5 L216.4 175.8 L224.4 175.7 L232.3 175.6 L240.3 175.2 L248.2 177.4 L256.2 177.4 L264.1 177.4 L272.1 177.4 L280.0 177.4 L288.0 177.4 L295.9 177.4 L303.9 177.4 L311.8 177.4 L319.8 177.4 L327.7 177.4 L335.7 177.4 L343.6 177.4 L351.6 177.4 L359.5 177.4 L367.5 177.4 L375.4 177.4 L383.4 177.4 L391.3 177.4 L399.3 177.4 L407.3 177.4 L415.2 177.4 L423.2 177.4 L431.1 177.4 L439.1 176.5 L447.0 167.2 L455.0 176.8 L462.9 177.4 L470.9 177.4 L478.8 177.4 L486.8 177.4 L494.7 177.4 L502.7 177.4 L510.6 177.4 L518.6 177.4 L526.5 177.4 L534.5 177.4 L542.4 177.4 L550.4 177.4 L550.4 177.1 L41.5 177.1 Z" fill="#7EB26D" fill-opacity="0.106" stroke="none"/>
<path d="M41.5 177.4 L49.5 177.4 L57.4 177.4 L65.4 177.4 L73.3 177.4 L81.3 177.4 L89.2 175.4 L97.2 175.4 L105.1 175.3 L113.1 175.2 L121.0 175.4 L129.0 175.2 L136.9 175.8 L144.9 175.5 L152.8 175.2 L160.8 175.4 L168.7 175.3 L176.7 175.8 L184.6 175.5 L192.6 175.7 L200.5 175.5 L208.5 175.5 L216.4 175.8 L224.4 175.7 L232.3 175.6 L240.3 175.2 L248.2 177.4 L256.2 177.4 L264.1 177.4 L272.1 177.4 L280.0 177.4 L288.0 177.4 L295.9 177.4 L303.9 177.4 L311.8 177.4 L319.8 177.4 L327.7 177.4 L335.7 177.4 L343.6 177.4 L351.6 177.4 L359.5 177.4 L367.5 177.4 L375.4 177.4 L383.4 177.4 L391.3 177.4 L399.3 177.4 L407.3 177.4 L415.2 177.4 L423.2 177.4 L431.1 177.4 L439.1 176.5 L447.0 167.2 L455.0 176.8 L462.9 177.4 L470.9 177.4 L478.8 177.4 L486.8 177.4 L494.7 177.4 L502.7 177.4 L510.6 177.4 L518.6 177.4 L526.5 177.4 L534.5 177.4 L542.4 177.4 L550.4 177.4" fill="none" stroke="#7EB26D" stroke-width="1" stroke-linejoin="round"/>
<path d="M41.5 177.4 L49.5 177.4 L57.4 177.4 L65.4 177.4 L73.3 177.4 L81.3 175.5 L89.2 166.3 L97.2 164.8 L105.1 165.1 L113.1 164.7 L121.0 165.1 L129.0 165.0 L136.9 165.0 L144.9 163.7 L152.8 164.8 L160.8 164.7 L168.7 164.4 L176.7 163.7 L184.6 164.9 L192.6 165.1 L200.5 163.4 L208.5 162.8 L216.4 165.0 L224.4 164.4 L232.3 163.5 L240.3 165.8 L248.2 171.1 L256.2 176.6 L264.1 177.4 L272.1 177.4 L280.0 177.4 L288.0 177.4 L295.9 177.4 L303.9 177.4 L311.8 177.4 L319.8 177.4 L327.7 177.4 L335.7 177.4 L343.6 177.4 L351.6 177.4 L359.5 177.4 L367.5 177.4 L375.4 177.4 L383.4 177.4 L391.3 177.4 L399.3 177.4 L407.3 177.4 L415.2 177.4 L423.2 177.4 L431.1 177.4 L439.1 172.7 L447.0 92.4 L455.0 175.8 L462.9 176.8 L470.9 177.1 L478.8 177.2 L486.8 176.1 L494.7 177.2 L502.7 177.2 L510.6 176.5 L518.6 175.7 L526.5 176.8 L534.5 177.3 L542.4 177.1 L550.4 177.2 L550.4 177.1 L41.5 177.1 Z" fill="#EAB839" fill-opacity="0.106" stroke="none"/>
<path d="M41.5 177.4 L49.5 177.4 L57.4 177.4 L65.4 177.4 L73.3 177.4 L81.3 175.5 L89.2 166.3 L97.2 164.8 L105.1 165.1 L113.1 164.7 L121.0 165.1 L129.0 165.0 L136.9 165.0 L144.9 163.7 L152.8 164.8 L160.8 164.7 L168.7 164.4 L176.7 163.7 L184.6 164.9 L192.6 165.1 L200.5 163.4 L208.5 162.8 L216.4 165.0 L224.4 164.4 L232.3 163.5 L240.3 165.8 L248.2 171.1 L256.2 176.6 L264.1 177.4 L272.1 177.4 L280.0 177.4 L288.0 177.4 L295.9 177.4 L303.9 177.4 L311.8 177.4 L319.8 177.4 L327.7 177.4 L335.7 177.4 L343.6 177.4 L351.6 177.4 L359.5 177.4 L367.5 177.4 L375.4 177.4 L383.4 177.4 L391.3 177.4 L399.3 177.4 L407.3 177.4 L415.2 177.4 L423.2 177.4 L431.1 177.4 L439.1 172.7 L447.0 92.4 L455.0 175.8 L462.9 176.8 L470.9 177.1 L478.8 177.2 L486.8 176.1 L494.7 177.2 L502.7 177.2 L510.6 176.5 L518.6 175.7 L526.5 176.8 L534.5 177.3 L542.4 177.1 L550.4 177.2" fill="none" stroke="#EAB839" stroke-width="1" stroke-linejoin="round"/>
<path d="M41.5 177.4 L49.5 177.4 L57.4 177.4 L65.4 177.4 L73.3 177.4 L81.3 174.1 L89.2 124.0 L97.2 131.1 L105.1 125.4 L113.1 121.9 L121.0 127.9 L129.0 121.6 L136.9 113.1 L144.9 118.8 L152.8 116.3 L160.8 121.4 L168.7 121.9 L176.7 122.8 L184.6 121.5 L192.6 125.6 L200.5 122.7 L208.5 109.7 L216.4 120.1 L224.4 121.6 L232.3 120.0 L240.3 121.8 L248.2 132.5 L256.2 140.3 L264.1 152.1 L272.1 154.3 L280.0 145.9 L288.0 162.0 L295.9 152.7 L303.9 142.6 L311.8 144.2 L319.8 147.2 L327.7 163.2 L335.7 135.8 L343.6 147.4 L351.6 122.7 L359.5 147.7 L367.5 162.0 L375.4 160.2 L383.4 158.8 L391.3 138.6 L399.3 156.3 L407.3 152.5 L415.2 152.6 L423.2 147.3 L431.1 147.7 L439.1 149.2 L447.0 155.1 L455.0 173.8 L462.9 176.9 L470.9 177.4 L478.8 177.4 L486.8 177.4 L494.7 177.4 L502.7 177.4 L510.6 177.4 L518.6 177.4 L526.5 177.4 L534.5 177.4 L542.4 177.4 L550.4 177.4 L550.4 177.1 L41.5 177.1 Z" fill="#6ED0E0" fill-opacity="0.106" stroke="none"/>
<path d="M41.5 177.4 L49.5 177.4 L57.4 177.4 L65.4 177.4 L73.3 177.4 L81.3 174.1 L89.2 124.0 L97.2 131.1 L105.1 125.4 L113.1 121.9 L121.0 127.9 L129.0 121.6 L136.9 113.1 L144.9 118.8 L152.8 116.3 L160.8 121.4 L168.7 121.9 L176.7 122.8 L184.6 121.5 L192.6 125.6 L200.5 122.7 L208.5 109.7 L216.4 120.1 L224.4 121.6 L232.3 120.0 L240.3 121.8 L248.2 132.5 L256.2 140.3 L264.1 152.1 L272.1 154.3 L280.0 145.9 L288.0 162.0 L295.9 152.7 L303.9 142.6 L311.8 144.2 L319.8 147.2 L327.7 163.2 L335.7 135.8 L343.6 147.4 L351.6 122.7 L359.5 147.7 L367.5 162.0 L375.4 160.2 L383.4 158.8 L391.3 138.6 L399.3 156.3 L407.3 152.5 L415.2 152.6 L423.2 147.3 L431.1 147.7 L439.1 149.2 L447.0 155.1 L455.0 173.8 L462.9 176.9 L470.9 177.4 L478.8 177.4 L486.8 177.4 L494.7 177.4 L502.7 177.4 L510.6 177.4 L518.6 177.4 L526.5 177.4 L534.5 177.4 L542.4 177.4 L550.4 177.4" fill="none" stroke="#6ED0E0" stroke-width="1" stroke-linejoin="round"/>
<path d="M41.5 177.4 L49.5 177.4 L57.4 177.4 L65.4 177.4 L73.3 177.4 L81.3 174.5 L89.2 131.3 L97.2 117.8 L105.1 112.8 L113.1 105.0 L121.0 119.1 L129.0 127.9 L136.9 126.0 L144.9 125.9 L152.8 121.2 L160.8 114.7 L168.7 119.5 L176.7 118.1 L184.6 121.4 L192.6 121.3 L200.5 123.9 L208.5 123.3 L216.4 131.1 L224.4 126.6 L232.3 126.9 L240.3 129.0 L248.2 138.0 L256.2 150.3 L264.1 147.9 L272.1 155.4 L280.0 165.6 L288.0 143.8 L295.9 140.4 L303.9 165.1 L311.8 158.1 L319.8 148.8 L327.7 151.9 L335.7 158.3 L343.6 152.6 L351.6 144.6 L359.5 147.1 L367.5 145.9 L375.4 134.6 L383.4 152.1 L391.3 156.2 L399.3 156.4 L407.3 152.4 L415.2 148.6 L423.2 152.5 L431.1 139.8 L439.1 146.8 L447.0 154.2 L455.0 174.3 L462.9 176.9 L470.9 177.4 L478.8 177.4 L486.8 177.4 L494.7 177.4 L502.7 177.4 L510.6 177.4 L518.6 177.4 L526.5 177.4 L534.5 177.4 L542.4 177.4 L550.4 177.4 L550.4 177.1 L41.5 177.1 Z" fill="#EF843C" fill-opacity="0.106" stroke="none"/>
<path d="M41.5 177.4 L49.5 177.4 L57.4 177.4 L65.4 177.4 L73.3 177.4 L81.3 174.5 L89.2 131.3 L97.2 117.8 L105.1 112.8 L113.1 105.0 L121.0 119.1 L129.0 127.9 L136.9 126.0 L144.9 125.9 L152.8 121.2 L160.8 114.7 L168.7 119.5 L176.7 118.1 L184.6 121.4 L192.6 121.3 L200.5 123.9 L208.5 123.3 L216.4 131.1 L224.4 126.6 L232.3 126.9 L240.3 129.0 L248.2 138.0 L256.2 150.3 L264.1 147.9 L272.1 155.4 L280.0 165.6 L288.0 143.8 L295.9 140.4 L303.9 165.1 L311.8 158.1 L319.8 148.8 L327.7 151.9 L335.7 158.3 L343.6 152.6 L351.6 144.6 L359.5 147.1 L367.5 145.9 L375.4 134.6 L383.4 152.1 L391.3 156.2 L399.3 156.4 L407.3 152.4 L415.2 148.6 L423.2 152.5 L431.1 139.8 L439.1 146.8 L447.0 154.2 L455.0 174.3 L462.9 176.9 L470.9 177.4 L478.8 177.4 L486.8 177.4 L494.7 177.4 L502.7 177.4 L510.6 177.4 L518.6 177.4 L526.5 177.4 L534.5 177.4 L542.4 177.4 L550.4 177.4" fill="none" stroke="#EF843C" stroke-width="1" stroke-linejoin="round"/>
<path d="M41.5 177.4 L49.5 177.4 L57.4 177.4 L65.4 177.4 L73.3 177.4 L81.3 174.3 L89.2 159.4 L97.2 157.3 L105.1 157.2 L113.1 157.7 L121.0 156.9 L129.0 157.4 L136.9 157.1 L144.9 157.4 L152.8 157.9 L160.8 156.8 L168.7 157.1 L176.7 157.4 L184.6 156.2 L192.6 157.2 L200.5 157.0 L208.5 154.9 L216.4 157.3 L224.4 157.0 L232.3 157.2 L240.3 158.6 L248.2 167.2 L256.2 176.2 L264.1 177.4 L272.1 177.4 L280.0 177.4 L288.0 177.4 L295.9 177.4 L303.9 177.4 L311.8 177.4 L319.8 177.4 L327.7 177.4 L335.7 177.4 L343.6 177.4 L351.6 177.4 L359.5 177.4 L367.5 177.4 L375.4 177.4 L383.4 177.4 L391.3 177.4 L399.3 177.4 L407.3 177.4 L415.2 177.4 L423.2 177.4 L431.1 177.4 L439.1 172.7 L447.0 79.8 L455.0 172.7 L462.9 176.8 L470.9 177.1 L478.8 177.1 L486.8 176.9 L494.7 177.2 L502.7 177.1 L510.6 176.9 L518.6 176.8 L526.5 176.8 L534.5 177.1 L542.4 177.1 L550.4 177.1 L550.4 177.1 L41.5 177.1 Z" fill="#E24D42" fill-opacity="0.106" stroke="none"/>
<path d="M41.5 177.4 L49.5 177.4 L57.4 177.4 L65.4 177.4 L73.3 177.4 L81.3 174.3 L89.2 159.4 L97.2 157.3 L105.1 157.2 L113.1 157.7 L121.0 156.9 L129.0 157.4 L136.9 157.1 L144.9 157.4 L152.8 157.9 L160.8 156.8 L168.7 157.1 L176.7 157.4 L184.6 156.2 L192.6 157.2 L200.5 157.0 L208.5 154.9 L216.4 157.3 L224.4 157.0 L232.3 157.2 L240.3 158.6 L248.2 167.2 L256.2 176.2 L264.1 177.4 L272.1 177.4 L280.0 177.4 L288.0 177.4 L295.9 177.4 L303.9 177.4 L311.8 177.4 L319.8 177.4 L327.7 177.4 L335.7 177.4 L343.6 177.4 L351.6 177.4 L359.5 177.4 L367.5 177.4 L375.4 177.4 L383.4 177.4 L391.3 177.4 L399.3 177.4 L407.3 177.4 L415.2 177.4 L423.2 177.4 L431.1 177.4 L439.1 172.7 L447.0 79.8 L455.0 172.7 L462.9 176.8 L470.9 177.1 L478.8 177.1 L486.8 176.9 L494.7 177.2 L502.7 177.1 L510.6 176.9 L518.6 176.8 L526.5 176.8 L534.5 177.1 L542.4 177.1 L550.4 177.1" fill="none" stroke="#E24D42" stroke-width="1" stroke-linejoin="round"/>
<path d="M41.5 177.4 L49.5 177.4 L57.4 177.4 L65.4 177.4 L73.3 177.4 L81.3 172.0 L89.2 122.7 L97.2 126.7 L105.1 122.8 L113.1 118.8 L121.0 116.3 L129.0 118.5 L136.9 123.9 L144.9 124.4 L152.8 127.7 L160.8 122.5 L168.7 124.5 L176.7 121.4 L184.6 127.0 L192.6 124.2 L200.5 125.5 L208.5 126.7 L216.4 126.7 L224.4 126.0 L232.3 126.7 L240.3 129.8 L248.2 141.0 L256.2 146.6 L264.1 153.6 L272.1 154.6 L280.0 154.5 L288.0 159.3 L295.9 143.9 L303.9 149.0 L311.8 150.6 L319.8 148.8 L327.7 147.2 L335.7 146.7 L343.6 149.2 L351.6 147.1 L359.5 143.9 L367.5 149.3 L375.4 157.4 L383.4 144.9 L391.3 155.0 L399.3 153.5 L407.3 150.7 L415.2 151.1 L423.2 155.3 L431.1 148.0 L439.1 153.6 L447.0 153.8 L455.0 175.3 L462.9 176.9 L470.9 177.4 L478.8 177.4 L486.8 177.4 L494.7 177.4 L502.7 177.4 L510.6 177.4 L518.6 177.4 L526.5 177.4 L534.5 177.4 L542.4 177.4 L550.4 177.4 L550.4 177.1 L41.5 177.1 Z" fill="#1F78C1" fill-opacity="0.106" stroke="none"/>
<path d="M41.5 177.4 L49.5 177.4 L57.4 177.4 L65.4 177.4 L73.3 177.4 L81.3 172.0 L89.2 122.7 L97.2 126.7 L105.1 122.8 L113.1 118.8 L121.0 116.3 L129.0 118.5 L136.9 123.9 L144.9 124.4 L152.8 127.7 L160.8 122.5 L168.7 124.5 L176.7 121.4 L184.6 127.0 L192.6 124.2 L200.5 125.5 L208.5 126.7 L216.4 126.7 L224.4 126.0 L232.3 126.7 L240.3 129.8 L248.2 141.0 L256.2 146.6 L264.1 153.6 L272.1 154.6 L280.0 154.5 L288.0 159.3 L295.9 143.9 L303.9 149.0 L311.8 150.6 L319.8 148.8 L327.7 147.2 L335.7 146.7 L343.6 149.2 L351.6 147.1 L359.5 143.9 L367.5 149.3 L375.4 157.4 L383.4 144.9 L391.3 155.0 L399.3 153.5 L407.3 150.7 L415.2 151.1 L423.2 155.3 L431.1 148.0 L439.1 153.6 L447.0 153.8 L455.0 175.3 L462.9 176.9 L470.9 177.4 L478.8 177.4 L486.8 177.4 L494.7 177.4 L502.7 177.4 L510.6 177.4 L518.6 177.4 L526.5 177.4 L534.5 177.4 L542.4 177.4 L550.4 177.4" fill="none" stroke="#1F78C1" stroke-width="1" stroke-linejoin="round"/>
<path d="M41.5 177.4 L49.5 177.4 L57.4 177.4 L65.4 177.4 L73.3 177.4 L81.3 174.9 L89.2 125.9 L97.2 121.3 L105.1 118.5 L113.1 119.7 L121.0 124.8 L129.0 118.2 L136.9 115.8 L144.9 124.0 L152.8 128.1 L160.8 119.0 L168.7 124.5 L176.7 125.0 L184.6 119.2 L192.6 118.5 L200.5 130.6 L208.5 125.8 L216.4 117.4 L224.4 123.3 L232.3 126.8 L240.3 130.1 L248.2 141.6 L256.2 145.1 L264.1 139.9 L272.1 153.6 L280.0 153.3 L288.0 160.3 L295.9 160.8 L303.9 155.8 L311.8 146.1 L319.8 150.1 L327.7 145.6 L335.7 144.7 L343.6 152.0 L351.6 137.1 L359.5 154.4 L367.5 155.1 L375.4 153.8 L383.4 143.4 L391.3 151.8 L399.3 155.8 L407.3 148.1 L415.2 143.5 L423.2 151.7 L431.1 152.6 L439.1 143.8 L447.0 160.5 L455.0 174.7 L462.9 176.9 L470.9 177.4 L478.8 177.4 L486.8 177.4 L494.7 177.4 L502.7 177.4 L510.6 177.4 L518.6 177.4 L526.5 177.4 L534.5 177.4 L542.4 177.4 L550.4 177.4 L550.4 177.1 L41.5 177.1 Z" fill="#BA43A9" fill-opacity="0.106" stroke="none"/>
<path d="M41.5 177.4 L49.5 177.4 L57.4 177.4 L65.4 177.4 L73.3 177.4 L81.3 174.9 L89.2 125.9 L97.2 121.3 L105.1 118.5 L113.1 119.7 L121.0 124.8 L129.0 118.2 L136.9 115.8 L144.9 124.0 L152.8 128.1 L160.8 119.0 L168.7 124.5 L176.7 125.0 L184.6 119.2 L192.6 118.5 L200.5 130.6 L208.5 125.8 L216.4 117.4 L224.4 123.3 L232.3 126.8 L240.3 130.1 L248.2 141.6 L256.2 145.1 L264.1 139.9 L272.1 153.6 L280.0 153.3 L288.0 160.3 L295.9 160.8 L303.9 155.8 L311.8 146.1 L319.8 150.1 L327.7 145.6 L335.7 144.7 L343.6 152.0 L351.6 137.1 L359.5 154.4 L367.5 155.1 L375.4 153.8 L383.4 143.4 L391.3 151.8 L399.3 155.8 L407.3 148.1 L415.2 143.5 L423.2 151.7 L431.1 152.6 L439.1 143.8 L447.0 160.5 L455.0 174.7 L462.9 176.9 L470.9 177.4 L478.8 177.4 L486.8 177.4 L494.7 177.4 L502.7 177.4 L510.6 177.4 L518.6 177.4 L526.5 177.4 L534.5 177.4 L542.4 177.4 L550.4 177.4" fill="none" stroke="#BA43A9" stroke-width="1" stroke-linejoin="round"/>
<path d="M41.5 177.4 L49.5 177.4 L57.4 177.4 L65.4 177.4 L73.3 177.4 L81.3 173.6 L89.2 129.0 L97.2 120.9 L105.1 128.9 L113.1 117.8 L121.0 121.9 L129.0 123.5 L136.9 113.9 L144.9 121.7 L152.8 124.9 L160.8 122.5 L168.7 120.2 L176.7 119.3 L184.6 122.5 L192.6 125.5 L200.5 124.9 L208.5 125.3 L216.4 110.5 L224.4 113.6 L232.3 124.1 L240.3 121.8 L248.2 139.4 L256.2 145.5 L264.1 153.7 L272.1 146.3 L280.0 136.5 L288.0 152.3 L295.9 157.8 L303.9 142.8 L311.8 152.4 L319.8 151.9 L327.7 133.3 L335.7 143.8 L343.6 139.2 L351.6 157.7 L359.5 152.0 L367.5 151.3 L375.4 149.7 L383.4 157.7 L391.3 160.0 L399.3 155.6 L407.3 155.9 L415.2 156.4 L423.2 145.5 L431.1 154.3 L439.1 160.8 L447.0 159.8 L455.0 175.4 L462.9 176.9 L470.9 177.4 L478.8 177.4 L486.8 177.4 L494.7 177.4 L502.7 177.4 L510.6 177.4 L518.6 177.4 L526.5 177.4 L534.5 177.4 L542.4 177.4 L550.4 177.4 L550.4 177.1 L41.5 177.1 Z" fill="#705DA0" fill-opacity="0.106" stroke="none"/>
<path d="M41.5 177.4 L49.5 177.4 L57.4 177.4 L65.4 177.4 L73.3 177.4 L81.3 173.6 L89.2 129.0 L97.2 120.9 L105.1 128.9 L113.1 117.8 L121.0 121.9 L129.0 123.5 L136.9 113.9 L144.9 121.7 L152.8 124.9 L160.8 122.5 L168.7 120.2 L176.7 119.3 L184.6 122.5 L192.6 125.5 L200.5 124.9 L208.5 125.3 L216.4 110.5 L224.4 113.6 L232.3 124.1 L240.3 121.8 L248.2 139.4 L256.2 145.5 L264.1 153.7 L272.1 146.3 L280.0 136.5 L288.0 152.3 L295.9 157.8 L303.9 142.8 L311.8 152.4 L319.8 151.9 L327.7 133.3 L335.7 143.8 L343.6 139.2 L351.6 157.7 L359.5 152.0 L367.5 151.3 L375.4 149.7 L383.4 157.7 L391.3 160.0 L399.3 155.6 L407.3 155.9 L415.2 156.4 L423.2 145.5 L431.1 154.3 L439.1 160.8 L447.0 159.8 L455.0 175.4 L462.9 176.9 L470.9 177.4 L478.8 177.4 L486.8 177.4 L494.7 177.4 L502.7 177.4 L510.6 177.4 L518.6 177.4 L526.5 177.4 L534.5 177.4 L542.4 177.4 L550.4 177.4" fill="none" stroke="#705DA0" stroke-width="1" stroke-linejoin="round"/>
<path d="M41.5 177.4 L49.5 177.4 L57.4 177.4 L65.4 177.4 L73.3 177.4 L81.3 172.4 L89.2 131.1 L97.2 117.8 L105.1 119.4 L113.1 127.1 L121.0 125.0 L129.0 121.1 L136.9 111.3 L144.9 130.1 L152.8 119.7 L160.8 119.0 L168.7 126.3 L176.7 123.6 L184.6 123.3 L192.6 120.4 L200.5 109.7 L208.5 125.7 L216.4 119.9 L224.4 121.2 L232.3 119.6 L240.3 122.8 L248.2 142.5 L256.2 143.1 L264.1 161.3 L272.1 128.0 L280.0 154.0 L288.0 151.6 L295.9 152.9 L303.9 118.7 L311.8 154.7 L319.8 160.6 L327.7 163.6 L335.7 151.8 L343.6 154.3 L351.6 154.8 L359.5 137.0 L367.5 145.7 L375.4 143.8 L383.4 154.2 L391.3 149.0 L399.3 152.3 L407.3 152.3 L415.2 146.0 L423.2 147.0 L431.1 148.9 L439.1 150.0 L447.0 156.2 L455.0 174.4 L462.9 176.9 L470.9 177.4 L478.8 177.4 L486.8 177.4 L494.7 177.4 L502.7 177.4 L510.6 177.4 L518.6 177.4 L526.5 177.4 L534.5 177.4 L542.4 177.4 L550.4 177.4 L550.4 177.1 L41.5 177.1 Z" fill="#508642" fill-opacity="0.106" stroke="none"/>
<path d="M41.5 177.4 L49.5 177.4 L57.4 177.4 L65.4 177.4 L73.3 177.4 L81.3 172.4 L89.2 131.1 L97.2 117.8 L105.1 119.4 L113.1 127.1 L121.0 125.0 L129.0 121.1 L136.9 111.3 L144.9 130.1 L152.8 119.7 L160.8 119.0 L168.7 126.3 L176.7 123.6 L184.6 123.3 L192.6 120.4 L200.5 109.7 L208.5 125.7 L216.4 119.9 L224.4 121.2 L232.3 119.6 L240.3 122.8 L248.2 142.5 L256.2 143.1 L264.1 161.3 L272.1 128.0 L280.0 154.0 L288.0 151.6 L295.9 152.9 L303.9 118.7 L311.8 154.7 L319.8 160.6 L327.7 163.6 L335.7 151.8 L343.6 154.3 L351.6 154.8 L359.5 137.0 L367.5 145.7 L375.4 143.8 L383.4 154.2 L391.3 149.0 L399.3 152.3 L407.3 152.3 L415.2 146.0 L423.2 147.0 L431.1 148.9 L439.1 150.0 L447.0 156.2 L455.0 174.4 L462.9 176.9 L470.9 177.4 L478.8 177.4 L486.8 177.4 L494.7 177.4 L502.7 177.4 L510.6 177.4 L518.6 177.4 L526.5 177.4 L534.5 177.4 L542.4 177.4 L550.4 177.4" fill="none" stroke="#508642" stroke-width="1" stroke-linejoin="round"/>
<path d="M41.5 177.4 L49.5 177.4 L57.4 177.4 L65.4 177.4 L73.3 177.4 L81.3 172.3 L89.2 130.5 L97.2 125.1 L105.1 121.0 L113.1 114.4 L121.0 124.7 L129.0 119.0 L136.9 123.6 L144.9 117.0 L152.8 120.4 L160.8 119.3 L168.7 118.1 L176.7 130.2 L184.6 122.6 L192.6 127.0 L200.5 124.0 L208.5 122.7 L216.4 117.7 L224.4 122.4 L232.3 116.2 L240.3 119.8 L248.2 133.3 L256.2 142.3 L264.1 149.1 L272.1 145.9 L280.0 165.9 L288.0 142.3 L295.9 144.5 L303.9 159.1 L311.8 162.6 L319.8 154.7 L327.7 144.5 L335.7 152.4 L343.6 145.9 L351.6 159.1 L359.5 158.0 L367.5 145.9 L375.4 132.2 L383.4 132.2 L391.3 156.9 L399.3 130.6 L407.3 145.9 L415.2 142.8 L423.2 140.1 L431.1 154.7 L439.1 145.9 L447.0 155.8 L455.0 176.0 L462.9 176.9 L470.9 177.4 L478.8 177.4 L486.8 177.4 L494.7 177.4 L502.7 177.4 L510.6 177.4 L518.6 177.4 L526.5 177.4 L534.5 177.4 L542.4 177.4 L550.4 177.4 L550.4 177.1 L41.5 177.1 Z" fill="#CCA300" fill-opacity="0.106" stroke="none"/>
<path d="M41.5 177.4 L49.5 177.4 L57.4 177.4 L65.4 177.4 L73.3 177.4 L81.3 172.3 L89.2 130.5 L97.2 125.1 L105.1 121.0 L113.1 114.4 L121.0 124.7 L129.0 119.0 L136.9 123.6 L144.9 117.0 L152.8 120.4 L160.8 119.3 L168.7 118.1 L176.7 130.2 L184.6 122.6 L192.6 127.0 L200.5 124.0 L208.5 122.7 L216.4 117.7 L224.4 122.4 L232.3 116.2 L240.3 119.8 L248.2 133.3 L256.2 142.3 L264.1 149.1 L272.1 145.9 L280.0 165.9 L288.0 142.3 L295.9 144.5 L303.9 159.1 L311.8 162.6 L319.8 154.7 L327.7 144.5 L335.7 152.4 L343.6 145.9 L351.6 159.1 L359.5 158.0 L367.5 145.9 L375.4 132.2 L383.4 132.2 L391.3 156.9 L399.3 130.6 L407.3 145.9 L415.2 142.8 L423.2 140.1 L431.1 154.7 L439.1 145.9 L447.0 155.8 L455.0 176.0 L462.9 176.9 L470.9 177.4 L478.8 177.4 L486.8 177.4 L494.7 177.4 L502.7 177.4 L510.6 177.4 L518.6 177.4 L526.5 177.4 L534.5 177.4 L542.4 177.4 L550.4 177.4" fill="none" stroke="#CCA300" stroke-width="1" stroke-linejoin="round"/>
<text x="18.60" y="181.3" font-size="12.2" textLength="15.30" lengthAdjust="spacingAndGlyphs">0%</text>
<text x="10.60" y="149.8" font-size="12.2" textLength="23.30" lengthAdjust="spacingAndGlyphs">20%</text>
<text x="10.30" y="118.3" font-size="12.2" textLength="23.60" lengthAdjust="spacingAndGlyphs">40%</text>
<text x="10.40" y="86.8" font-size="12.2" textLength="23.50" lengthAdjust="spacingAndGlyphs">60%</text>
<text x="10.40" y="55.3" font-size="12.2" textLength="23.50" lengthAdjust="spacingAndGlyphs">80%</text>
<text x="41.5" y="196.0" font-size="12.0" text-anchor="middle">15:04</text>
<text x="136.9" y="196.0" font-size="12.0" text-anchor="middle">15:06</text>
<text x="232.3" y="196.0" font-size="12.0" text-anchor="middle">15:08</text>
<text x="327.7" y="196.0" font-size="12.0" text-anchor="middle">15:10</text>
<text x="423.2" y="196.0" font-size="12.0" text-anchor="middle">15:12</text>
<text x="518.6" y="196.0" font-size="12.0" text-anchor="middle">15:14</text>
<rect x="19.0" y="217.0" width="14" height="4" rx="1" fill="#8ab97b"/><rect x="20.0" y="218.0" width="12" height="2" fill="#7EB26D"/>
<text x="47.20" y="221.20" font-size="12.4" textLength="20.20" lengthAdjust="spacingAndGlyphs">sda</text>
<rect x="84.1" y="217.0" width="14" height="4" rx="1" fill="#ecbf4c"/><rect x="85.1" y="218.0" width="12" height="2" fill="#EAB839"/>
<text x="112.30" y="221.20" font-size="12.4" textLength="20.80" lengthAdjust="spacingAndGlyphs">sdb</text>
<rect x="149.0" y="217.0" width="14" height="4" rx="1" fill="#7cd4e3"/><rect x="150.0" y="218.0" width="12" height="2" fill="#6ED0E0"/>
<text x="177.70" y="221.20" font-size="12.4" textLength="20.40" lengthAdjust="spacingAndGlyphs">sdc</text>
<rect x="214.0" y="217.0" width="14" height="4" rx="1" fill="#f0904f"/><rect x="215.0" y="218.0" width="12" height="2" fill="#EF843C"/>
<text x="242.70" y="221.20" font-size="12.4" textLength="20.60" lengthAdjust="spacingAndGlyphs">sdd</text>
<rect x="279.9" y="217.0" width="14" height="4" rx="1" fill="#e45e54"/><rect x="280.9" y="218.0" width="12" height="2" fill="#E24D42"/>
<text x="307.90" y="221.20" font-size="12.4" textLength="20.50" lengthAdjust="spacingAndGlyphs">sde</text>
<rect x="345.1" y="217.0" width="14" height="4" rx="1" fill="#3585c7"/><rect x="346.1" y="218.0" width="12" height="2" fill="#1F78C1"/>
<text x="373.30" y="221.20" font-size="12.4" textLength="20.90" lengthAdjust="spacingAndGlyphs">sdg</text>
<rect x="410.1" y="217.0" width="14" height="4" rx="1" fill="#c055b1"/><rect x="411.1" y="218.0" width="12" height="2" fill="#BA43A9"/>
<text x="438.50" y="221.20" font-size="12.4" textLength="20.50" lengthAdjust="spacingAndGlyphs">sdh</text>
<rect x="476.1" y="217.0" width="14" height="4" rx="1" fill="#7e6da9"/><rect x="477.1" y="218.0" width="12" height="2" fill="#705DA0"/>
<text x="504.00" y="221.20" font-size="12.4" textLength="16.30" lengthAdjust="spacingAndGlyphs">sdi</text>
<rect x="19.0" y="238.0" width="14" height="4" rx="1" fill="#619254"/><rect x="20.0" y="239.0" width="12" height="2" fill="#508642"/>
<text x="47.20" y="242.20" font-size="12.4" textLength="16.60" lengthAdjust="spacingAndGlyphs">sdj</text>
<rect x="80.0" y="238.0" width="14" height="4" rx="1" fill="#d1ac19"/><rect x="81.0" y="239.0" width="12" height="2" fill="#CCA300"/>
<text x="108.40" y="242.20" font-size="12.4" textLength="16.30" lengthAdjust="spacingAndGlyphs">sdl</text>
</svg></section>
</main>
<div class="abs" style="left:0;top:619px;width:1749px;height:2px;background:#020202"></div>
<div class="abs" style="left:178px;top:619px;width:48px;height:2px;background:#373b38"></div>
</body></html>
